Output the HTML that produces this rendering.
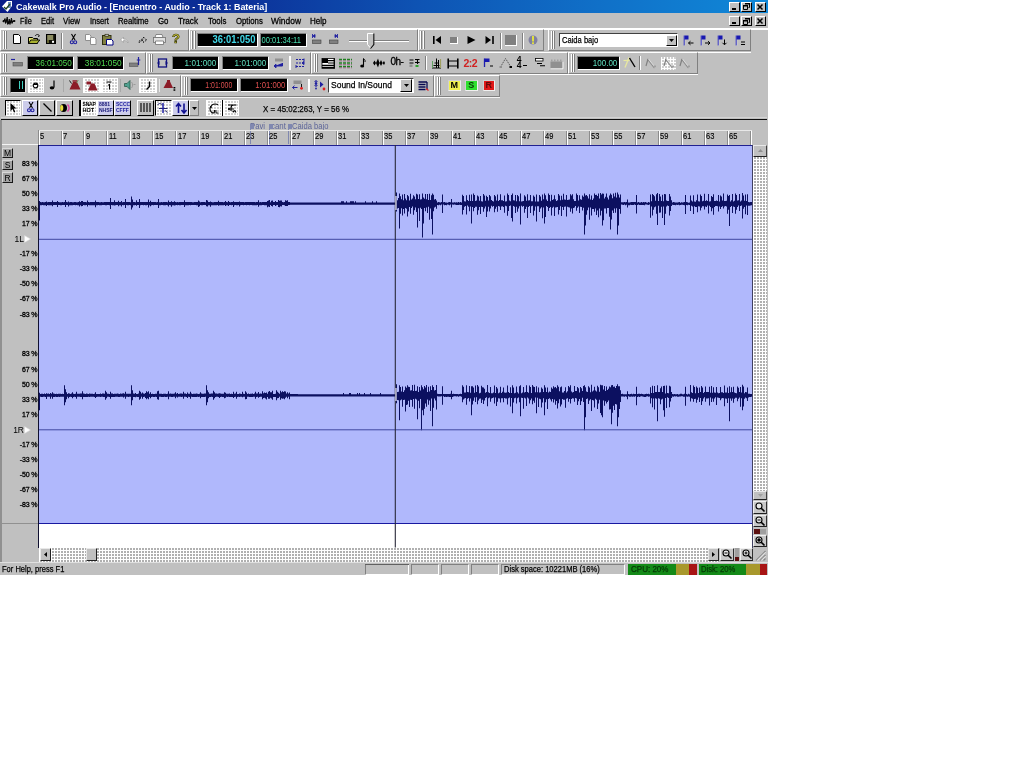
<!DOCTYPE html>
<html lang="en"><head><meta charset="utf-8"><title>Cakewalk Pro Audio</title>
<style>
html,body{margin:0;padding:0;background:#fff;}
body{width:1024px;height:768px;overflow:hidden;position:relative;}
#app{position:absolute;left:0;top:0;width:768px;height:575px;background:#c0c0c0;overflow:hidden;
 font-family:"Liberation Sans",sans-serif;font-size:8.3px;color:#000;line-height:10px;}
#app div,#app span,#app svg{position:absolute;box-sizing:border-box;}
#app svg{overflow:visible;}
#in{left:0;top:0;width:768px;height:575px;filter:blur(0.33px);will-change:transform;}
.t{white-space:nowrap;}
.b{font-weight:bold;}
.lcd{background:#000;border:1px solid;border-color:#808080 #fff #fff #808080;}
.lcd span{right:0.5px;top:1px;font-size:9px;line-height:10px;white-space:nowrap;transform-origin:100% 50%;}
.btn{background:#c0c0c0;border:1px solid;border-color:#fff #000 #000 #fff;}
.chk{background-color:#fff;background-image:linear-gradient(90deg,#fff 1.5px,rgba(255,255,255,0) 1.5px),linear-gradient(0deg,#fff 1.5px,#b0b0b0 1.5px);background-size:3px 3px,3px 3px;}
.chkb{background-color:#fff;background-image:linear-gradient(90deg,#fff 1.5px,rgba(255,255,255,0) 1.5px),linear-gradient(0deg,#fff 1.5px,#cfcfcf 1.5px);background-size:3px 3px,3px 3px;}
.dn{border:1px solid;border-color:#404040 #fff #fff #404040;}
.up{border:1px solid;border-color:#fff #404040 #404040 #fff;}
.sep{width:2px;border-left:1px solid #808080;border-right:1px solid #fff;}
.grip{width:2px;border-left:1px solid #fff;border-right:1px solid #808080;}
.tbend{width:1px;background:#808080;}
.lab{font-size:7px;line-height:8px;white-space:nowrap;text-align:right;width:37.3px;left:0;letter-spacing:-0.15px;-webkit-text-stroke:0.3px #000;}
.rl{font-size:9.4px;line-height:10px;top:131px;white-space:nowrap;-webkit-text-stroke:0.15px #000;transform:scaleX(0.8);transform-origin:0 50%;}
.tick{top:130px;width:2px;height:15px;border-left:1px solid #8c8c8c;border-right:1px solid #fff;margin-left:-1px;}
</style></head><body><div id="app"><div id="in">
<div style="left:0px;top:0px;width:768px;height:13px;background:linear-gradient(90deg,#0a1c88 0%,#0c3098 30%,#0e54b4 55%,#1070c8 78%,#1088d8 100%);"></div>
<svg style="left:2px;top:1px" width="11" height="11" viewBox="0 0 11 11"><path d="M0 5.5L5 0h5v5L5.5 11z" fill="#fff"/><path d="M6 1h3v6H6z" fill="#7090c0"/><path d="M2 6l2 2 4-5" stroke="#204020" stroke-width="1.3" fill="none"/></svg>
<span class="t" style="left:16px;top:2.0px;font-size:9.6px;transform:scaleX(0.932);transform-origin:0 50%;font-weight:bold;color:#fff;">Cakewalk Pro Audio - [Encuentro - Audio - Track 1: Bateria]</span>
<div class="btn" style="left:729px;top:1.5px;width:11px;height:10px;"></div>
<div style="left:732px;top:7.5px;width:4px;height:2px;background:#000;"></div>
<div class="btn" style="left:741px;top:1.5px;width:11px;height:10px;"></div>
<svg style="left:743px;top:3.0px" width="7" height="7" viewBox="0 0 7 7"><path d="M2.5 0.5h4v4h-1M0.5 2.5h4v4h-4z" fill="none" stroke="#000" stroke-width="1"/><path d="M2 0h5v1.6H2zM0 2h5v1.6H0z" fill="#000"/></svg>
<div class="btn" style="left:754.5px;top:1.5px;width:11px;height:10px;"></div>
<svg style="left:757.0px;top:3.5px" width="6" height="6" viewBox="0 0 6 6"><path d="M0.5 0.5l5 5M5.5 0.5l-5 5" stroke="#000" stroke-width="1.5"/></svg>
<div class="btn" style="left:729px;top:16px;width:11px;height:10px;"></div>
<div style="left:732px;top:22px;width:4px;height:2px;background:#000;"></div>
<div class="btn" style="left:741px;top:16px;width:11px;height:10px;"></div>
<svg style="left:743px;top:17.5px" width="7" height="7" viewBox="0 0 7 7"><path d="M2.5 0.5h4v4h-1M0.5 2.5h4v4h-4z" fill="none" stroke="#000" stroke-width="1"/><path d="M2 0h5v1.6H2zM0 2h5v1.6H0z" fill="#000"/></svg>
<div class="btn" style="left:754.5px;top:16px;width:11px;height:10px;"></div>
<svg style="left:757.0px;top:18px" width="6" height="6" viewBox="0 0 6 6"><path d="M0.5 0.5l5 5M5.5 0.5l-5 5" stroke="#000" stroke-width="1.5"/></svg>
<svg style="left:3px;top:16px" width="12" height="9" viewBox="0 0 12 9"><path d="M0 4.5h1l1-2 1 4 1.2-5.5 1 7 1-5 1.2 4 1-5 1 4 1-1.5h1.6v1H10l-1 2-1-3-1 4-1.2-3-1 3-1-5-1.2 4-1-3-1 1.5H0z" fill="#000" stroke="#000" stroke-width="0.8"/></svg>
<span class="t" style="left:20px;top:16.2px;font-size:9.6px;transform:scaleX(0.756);transform-origin:0 50%;-webkit-text-stroke:0.3px #000;">File</span>
<span class="t" style="left:41px;top:16.2px;font-size:9.6px;transform:scaleX(0.786);transform-origin:0 50%;-webkit-text-stroke:0.3px #000;">Edit</span>
<span class="t" style="left:63px;top:16.2px;font-size:9.6px;transform:scaleX(0.824);transform-origin:0 50%;-webkit-text-stroke:0.3px #000;">View</span>
<span class="t" style="left:90px;top:16.2px;font-size:9.6px;transform:scaleX(0.791);transform-origin:0 50%;-webkit-text-stroke:0.3px #000;">Insert</span>
<span class="t" style="left:117.5px;top:16.2px;font-size:9.6px;transform:scaleX(0.810);transform-origin:0 50%;-webkit-text-stroke:0.3px #000;">Realtime</span>
<span class="t" style="left:157.5px;top:16.2px;font-size:9.6px;transform:scaleX(0.820);transform-origin:0 50%;-webkit-text-stroke:0.3px #000;">Go</span>
<span class="t" style="left:178px;top:16.2px;font-size:9.6px;transform:scaleX(0.846);transform-origin:0 50%;-webkit-text-stroke:0.3px #000;">Track</span>
<span class="t" style="left:208px;top:16.2px;font-size:9.6px;transform:scaleX(0.817);transform-origin:0 50%;-webkit-text-stroke:0.3px #000;">Tools</span>
<span class="t" style="left:235.5px;top:16.2px;font-size:9.6px;transform:scaleX(0.810);transform-origin:0 50%;-webkit-text-stroke:0.3px #000;">Options</span>
<span class="t" style="left:271px;top:16.2px;font-size:9.6px;transform:scaleX(0.879);transform-origin:0 50%;-webkit-text-stroke:0.3px #000;">Window</span>
<span class="t" style="left:309.7px;top:16.2px;font-size:9.6px;transform:scaleX(0.836);transform-origin:0 50%;-webkit-text-stroke:0.3px #000;">Help</span>
<div style="left:0px;top:27.6px;width:768px;height:0.8px;background:#a0a0a0;"></div>
<div style="left:0px;top:28.4px;width:768px;height:1.2px;background:#fff;"></div>
<div style="left:0px;top:28.6px;width:188.5px;height:22.9px;border:1px solid;border-color:#fff #808080 #808080 #fff;"></div>
<div class="grip" style="left:2.5px;top:30.6px;width:2px;height:18.9px;"></div>
<div class="grip" style="left:5px;top:30.6px;width:2px;height:18.9px;"></div>
<div style="left:188.5px;top:28.6px;width:229.0px;height:22.9px;border:1px solid;border-color:#fff #808080 #808080 #fff;"></div>
<div class="grip" style="left:191.0px;top:30.6px;width:2px;height:18.9px;"></div>
<div class="grip" style="left:193.5px;top:30.6px;width:2px;height:18.9px;"></div>
<div style="left:417.5px;top:28.6px;width:126.5px;height:22.9px;border:1px solid;border-color:#fff #808080 #808080 #fff;"></div>
<div class="grip" style="left:420.0px;top:30.6px;width:2px;height:18.9px;"></div>
<div class="grip" style="left:422.5px;top:30.6px;width:2px;height:18.9px;"></div>
<div style="left:548px;top:28.6px;width:203px;height:22.9px;border:1px solid;border-color:#fff #808080 #808080 #fff;"></div>
<div class="grip" style="left:550.5px;top:30.6px;width:2px;height:18.9px;"></div>
<div class="grip" style="left:553px;top:30.6px;width:2px;height:18.9px;"></div>
<svg style="left:13px;top:34px" width="8" height="10" viewBox="0 0 8 10"><path d="M0.5 0.5h5l2 2v7h-7z" fill="#fff" stroke="#000" stroke-width="1"/></svg>
<svg style="left:28px;top:34px" width="13" height="10" viewBox="0 0 13 10"><path d="M0.5 3.5h4l1 1h4v5h-9z" fill="#e0e068" stroke="#000" stroke-width="1"/><path d="M2.8 6h9l-2.8 3.5h-8.5z" fill="#a8b030" stroke="#000" stroke-width="0.9"/><path d="M7 2c1.5-2 3.5-2 4.5 0l-1.5 0.5" fill="none" stroke="#000" stroke-width="0.9"/></svg>
<svg style="left:46px;top:34px" width="10" height="10" viewBox="0 0 10 10"><rect x="0.5" y="0.5" width="9" height="9" fill="#101008" stroke="#000"/><rect x="1.2" y="1" width="6" height="5" fill="#8c8c60"/><rect x="1" y="6" width="2" height="3" fill="#606030"/><rect x="6" y="6.8" width="2" height="2" fill="#fff"/></svg>
<div class="sep" style="left:61px;top:33px;width:2px;height:16px;"></div>
<svg style="left:70px;top:34px" width="7" height="11" viewBox="0 0 7 11"><path d="M1.5 0l3.5 6M5.5 0l-3.5 6" stroke="#000" stroke-width="1.1"/><circle cx="1.8" cy="8.3" r="1.5" fill="none" stroke="#2020a0" stroke-width="1.1"/><circle cx="5.2" cy="8.3" r="1.5" fill="none" stroke="#2020a0" stroke-width="1.1"/></svg>
<svg style="left:85px;top:34px" width="12" height="11" viewBox="0 0 12 11"><path d="M0.5 0.5h4l1.5 1.5v4.5h-5.5z" fill="#fff" stroke="#909090"/><path d="M5.5 3.5h4l1.5 1.5v5.5h-5.5z" fill="#fff" stroke="#909090"/></svg>
<svg style="left:102px;top:33.5px" width="12" height="12" viewBox="0 0 12 12"><rect x="0.5" y="1.5" width="8.5" height="9" fill="#808040" stroke="#303010"/><rect x="3" y="0.3" width="3.5" height="2" fill="#c0c0c0" stroke="#303010" stroke-width="0.7"/><path d="M4.5 5.5h5l1.5 1.5v4h-6.5z" fill="#fff" stroke="#000080"/></svg>
<svg style="left:120px;top:36px" width="9" height="8" viewBox="0 0 9 8"><path d="M0.5 4l3-3v2c3 0 4.5 1.5 4.5 4-1-2-2-2.5-4.5-2.5v2z" fill="#fff" stroke="#a0a0a0" stroke-width="0.8"/></svg>
<svg style="left:138px;top:36px" width="9" height="8" viewBox="0 0 9 8"><path d="M8.5 4l-3-3v2c-3 0-4.5 1.5-4.5 4 1-2 2-2.5 4.5-2.5v2z" fill="#c0c0c0" stroke="#000" stroke-width="0.8" stroke-dasharray="2 1.2"/></svg>
<svg style="left:153px;top:34px" width="13" height="11" viewBox="0 0 13 11"><path d="M3 0.5h6l1 3h-8z" fill="#fff" stroke="#707070" stroke-width="0.8"/><rect x="0.5" y="3.5" width="12" height="5" fill="#e0e0e0" stroke="#707070" stroke-width="0.8"/><path d="M2.5 7h8v3.5h-8z" fill="#fff" stroke="#707070" stroke-width="0.8"/></svg>
<span class="t" style="left:172px;top:32px;font-size:13px;font-weight:bold;color:#e8e040;line-height:14px;-webkit-text-stroke:0.7px #303000;">?</span>
<div class="lcd" style="left:196.5px;top:33px;width:61px;height:14px;"><span style="color:#40d8e8;font-size:10.2px;right:1.5px;top:1.3px;transform:scaleX(0.925);font-weight:bold;">36:01:050</span></div>
<div class="lcd" style="left:259.5px;top:33px;width:47px;height:14px;"><span style="color:#48e0b0;font-size:9.6px;right:5.0px;top:1.3px;transform:scaleX(0.790);">00:01:34:11</span></div>
<svg style="left:312px;top:34px" width="10" height="11" viewBox="0 0 10 11"><path d="M0.5 0v4M3 0.5l-2 1.5 2 1.5z" stroke="#2020a0" fill="#2020a0" stroke-width="0.9"/><rect x="0.5" y="6" width="8.5" height="3.5" fill="#808080" stroke="#404040" stroke-width="0.6"/></svg>
<svg style="left:329px;top:34px" width="10" height="11" viewBox="0 0 10 11"><path d="M8.5 0v4M6 0.5l2 1.5-2 1.5z" stroke="#2020a0" fill="#2020a0" stroke-width="0.9"/><rect x="0.5" y="6" width="8.5" height="3.5" fill="#808080" stroke="#404040" stroke-width="0.6"/></svg>
<div style="left:348.5px;top:39.5px;width:60px;height:2.5px;background:#fff;border-top:1px solid #808080;"></div>
<svg style="left:366.5px;top:33px" width="8" height="16" viewBox="0 0 8 16"><path d="M0.5 0.5h6v11l-3 3.5-3-3.5z" fill="#c0c0c0" stroke="#fff" stroke-width="1"/><path d="M6.8 0.5v11l-3.3 4" fill="none" stroke="#000" stroke-width="1.1"/></svg>
<svg style="left:433px;top:36px" width="9" height="8" viewBox="0 0 9 8"><path d="M0.8 0v8" stroke="#000" stroke-width="1.6"/><path d="M8 0v8l-5.5-4z" fill="#000"/></svg>
<div style="left:450px;top:36.5px;width:8px;height:7px;background:#808080;border-right:1px solid #fff;border-bottom:1px solid #fff;"></div>
<svg style="left:467px;top:36px" width="9" height="8" viewBox="0 0 9 8"><path d="M0.5 0l8 4-8 4z" fill="#000"/></svg>
<svg style="left:485px;top:36px" width="9" height="8" viewBox="0 0 9 8"><path d="M8 0v8" stroke="#000" stroke-width="1.6"/><path d="M0.5 0v8l5.5-4z" fill="#000"/></svg>
<div class="sep" style="left:499.5px;top:33px;width:2px;height:16px;"></div>
<div style="left:505px;top:34.5px;width:12px;height:11px;background:#808080;border-right:1px solid #fff;border-bottom:1px solid #fff;"></div>
<div class="sep" style="left:521.5px;top:33px;width:2px;height:16px;"></div>
<svg style="left:528px;top:35px" width="10" height="10" viewBox="0 0 10 10"><circle cx="5" cy="5" r="4.5" fill="#8080a0"/><rect x="4" y="1" width="2" height="5.5" fill="#e0e040"/><rect x="4" y="7.3" width="2" height="1.7" fill="#e0e040"/></svg>
<div style="left:559px;top:33px;width:119px;height:14px;background:#fff;border:1px solid;border-color:#404040 #fff #fff #404040;border-top-width:1.5px;border-left-width:1.5px;"></div>
<span class="t" style="left:562px;top:35px;font-size:9.4px;transform:scaleX(0.808);transform-origin:0 50%;-webkit-text-stroke:0.25px #000;">Caida bajo</span>
<div class="btn" style="left:666px;top:34.5px;width:11px;height:11.5px;"></div>
<svg style="left:669px;top:38.5px" width="5" height="3" viewBox="0 0 5 3"><path d="M0 0h5l-2.5 3z" fill="#000"/></svg>
<svg style="left:683px;top:34.5px" width="12" height="11" viewBox="0 0 12 11"><path d="M1.5 0.5v10" stroke="#fff" stroke-width="1.2"/><path d="M1.2 0.5v10" stroke="#2020b0" stroke-width="1"/><rect x="1.5" y="0.5" width="4" height="4" fill="#1818b0"/><path d="M5.5 8h5M5.5 8l2-1.8M5.5 8l2 1.8" stroke="#000" stroke-width="1" fill="none"/></svg>
<svg style="left:700px;top:34.5px" width="12" height="11" viewBox="0 0 12 11"><path d="M1.5 0.5v10" stroke="#fff" stroke-width="1.2"/><path d="M1.2 0.5v10" stroke="#2020b0" stroke-width="1"/><rect x="1.5" y="0.5" width="4" height="4" fill="#1818b0"/><path d="M5 8h5M10 8l-2-1.8M10 8l-2 1.8" stroke="#000" stroke-width="1" fill="none"/></svg>
<svg style="left:717px;top:34.5px" width="12" height="11" viewBox="0 0 12 11"><path d="M1.5 0.5v10" stroke="#fff" stroke-width="1.2"/><path d="M1.2 0.5v10" stroke="#2020b0" stroke-width="1"/><rect x="1.5" y="0.5" width="4" height="4" fill="#1818b0"/><path d="M7.5 4.5v5M7.5 9.8l-2-2M7.5 9.8l2-2" stroke="#000" stroke-width="1" fill="none"/></svg>
<svg style="left:735px;top:34.5px" width="12" height="11" viewBox="0 0 12 11"><path d="M1.5 0.5v10" stroke="#fff" stroke-width="1.2"/><path d="M1.2 0.5v10" stroke="#2020b0" stroke-width="1"/><rect x="1.5" y="0.5" width="4" height="4" fill="#1818b0"/><path d="M6 7h4M6 9.5h4" stroke="#000" stroke-width="1.1" fill="none"/></svg>
<div style="left:0px;top:52px;width:146px;height:22px;border:1px solid;border-color:#fff #808080 #808080 #fff;"></div>
<div class="grip" style="left:2.5px;top:54px;width:2px;height:18px;"></div>
<div class="grip" style="left:5px;top:54px;width:2px;height:18px;"></div>
<div style="left:146px;top:52px;width:165px;height:22px;border:1px solid;border-color:#fff #808080 #808080 #fff;"></div>
<div class="grip" style="left:148.5px;top:54px;width:2px;height:18px;"></div>
<div class="grip" style="left:151px;top:54px;width:2px;height:18px;"></div>
<div style="left:311px;top:52px;width:257px;height:22px;border:1px solid;border-color:#fff #808080 #808080 #fff;"></div>
<div class="grip" style="left:313.5px;top:54px;width:2px;height:18px;"></div>
<div class="grip" style="left:316px;top:54px;width:2px;height:18px;"></div>
<div style="left:568px;top:52px;width:130px;height:22px;border:1px solid;border-color:#fff #808080 #808080 #fff;"></div>
<div class="grip" style="left:570.5px;top:54px;width:2px;height:18px;"></div>
<div class="grip" style="left:573px;top:54px;width:2px;height:18px;"></div>
<svg style="left:10px;top:58px" width="13" height="9" viewBox="0 0 13 9"><path d="M1 1.5h4" stroke="#2020a0" stroke-width="1.2"/><rect x="3" y="4.5" width="9.5" height="3.5" fill="#808080" stroke="#505050" stroke-width="0.6"/></svg>
<div class="lcd" style="left:27px;top:55.5px;width:46.5px;height:14.5px;"><span style="color:#50d850;font-size:9.6px;right:0.9px;top:1.6px;transform:scaleX(0.845);">36:01:050</span></div>
<div class="lcd" style="left:76.5px;top:55.5px;width:47.5px;height:14.5px;"><span style="color:#50d850;font-size:9.6px;right:0.9px;top:1.6px;transform:scaleX(0.864);">38:01:050</span></div>
<svg style="left:129px;top:57px" width="12" height="10" viewBox="0 0 12 10"><rect x="0.5" y="6" width="8.5" height="3.5" fill="#808080" stroke="#505050" stroke-width="0.6"/><path d="M9.5 0v8M7.8 3h3.5" stroke="#2020a0" stroke-width="1.2"/></svg>
<svg style="left:156.5px;top:57.5px" width="11" height="10" viewBox="0 0 11 10"><rect x="1.5" y="1" width="8" height="8" fill="none" stroke="#101080" stroke-width="1.3"/><path d="M0 5l2.5-2v4zM11 5l-2.5-2v4z" fill="#101080"/></svg>
<div class="lcd" style="left:171.5px;top:55.5px;width:47px;height:14.5px;"><span style="color:#60e0c0;font-size:9.6px;right:0.9px;top:1.6px;transform:scaleX(0.851);">1:01:000</span></div>
<div class="lcd" style="left:221.5px;top:55.5px;width:47px;height:14.5px;"><span style="color:#60e0c0;font-size:9.6px;right:0.9px;top:1.6px;transform:scaleX(0.851);">1:01:000</span></div>
<svg style="left:273px;top:58px" width="11" height="10" viewBox="0 0 11 10"><rect x="2" y="0.5" width="8" height="3" fill="#909090"/><path d="M9.5 5v3h-8M1 8l2-1.8v3.6z" stroke="#2020a0" fill="#2020a0" stroke-width="1"/></svg>
<div style="left:289px;top:56px;width:2px;height:14px;background:#fff;width:1.5px;"></div>
<svg style="left:294.5px;top:57.5px" width="11" height="11" viewBox="0 0 11 11"><path d="M1 1.5h8M1 5h8M1 8.5h8" stroke="#2020a0" stroke-width="1" stroke-dasharray="2 1"/><path d="M9 0.5v3M1 7v3M7 5l2-1.5v3z" stroke="#2020a0" stroke-width="1" fill="#2020a0"/></svg>
<svg style="left:321.5px;top:57.5px" width="13" height="11" viewBox="0 0 13 11"><rect x="0" y="0.5" width="12.5" height="10" fill="#fff" stroke="#000" stroke-width="0.8"/><rect x="0" y="0.5" width="6" height="4.5" fill="#000"/><path d="M0 7.3h12.5M0 9.4h12.5M6 2.7h6.5M6 5h6.5" stroke="#000" stroke-width="1.2"/><path d="M12.2 0.5v10" stroke="#000" stroke-width="1.2"/></svg>
<svg style="left:338.5px;top:58px" width="13" height="10" viewBox="0 0 13 10"><path d="M0 1.5h13M0 5h13M0 8.5h13" stroke="#208020" stroke-width="1.5" stroke-dasharray="3 1"/><path d="M0 3h13M0 6.5h13M0 9.8h13" stroke="#802060" stroke-width="0.5" stroke-dasharray="3 1"/></svg>
<svg style="left:359.5px;top:57.5px" width="6" height="10" viewBox="0 0 6 10"><path d="M3.5 0.5v7" stroke="#000" stroke-width="1.1"/><ellipse cx="2.2" cy="8" rx="2" ry="1.5" fill="#000"/><path d="M3.5 0.5c1 1 2 1.5 1.5 3.5" stroke="#000" fill="none" stroke-width="0.9"/></svg>
<svg style="left:373px;top:58px" width="12" height="10" viewBox="0 0 12 10"><path d="M0 5l1.5-2.5 1.5 2.5 2-4.5 1.5 4.5 1.5-3 1.5 3 1.5-2 1 2-1 2-1.5-2-1.5 3-1.5-3-1.5 4.5-2-4.5-1.5 2.5z" fill="#000"/></svg>
<span class="t" style="left:390.5px;top:57.3px;font-size:10px;letter-spacing:-0.5px;-webkit-text-stroke:0.3px #000;">0h-</span>
<svg style="left:409px;top:58px" width="11" height="10" viewBox="0 0 11 10"><path d="M0.5 2h4M0.5 5h4M6 1.5h4.5M6 4.5h4.5M8.5 1v5" stroke="#000" stroke-width="1.1"/><rect x="0.5" y="6.5" width="3" height="2.5" fill="#909090"/><rect x="6.5" y="7" width="3" height="2" fill="#30a030"/></svg>
<div class="sep" style="left:424.5px;top:56px;width:2px;height:14px;"></div>
<svg style="left:431px;top:57.5px" width="12" height="11" viewBox="0 0 12 11"><path d="M1 10h9M2.5 7.5h6M3.5 5h4M5.5 0.5v9.5M7.5 2v8" stroke="#000" stroke-width="1"/><path d="M9.5 1v9" stroke="#a0a060" stroke-width="1.2"/><path d="M1.5 3v7" stroke="#60a060" stroke-width="1"/></svg>
<svg style="left:447px;top:57.5px" width="12" height="11" viewBox="0 0 12 11"><path d="M1.2 0.5v10M10.8 0.5v10" stroke="#000" stroke-width="1.6"/><path d="M1 3h10M1 8h10" stroke="#000" stroke-width="1"/></svg>
<span class="t" style="left:463.5px;top:57.5px;font-size:10.5px;font-weight:bold;color:#d02020;letter-spacing:-0.5px;line-height:11px;">2:2</span>
<svg style="left:483px;top:58px" width="11" height="10" viewBox="0 0 11 10"><path d="M1.5 0.5v8.5" stroke="#2020b0" stroke-width="1.3"/><rect x="1.5" y="0.5" width="5" height="3.5" fill="#1818b0"/><path d="M7 8h3" stroke="#000" stroke-width="1"/></svg>
<svg style="left:499px;top:57.5px" width="14" height="11" viewBox="0 0 14 11"><path d="M1.5 9l5-8.5 5.5 8.5" fill="none" stroke="#505050" stroke-width="0.9" stroke-dasharray="1.5 0.8"/><rect x="0.5" y="8" width="2.5" height="2" fill="#909090"/><rect x="10.5" y="8" width="2.5" height="2" fill="#000"/></svg>
<span class="t" style="left:516.8px;top:56.3px;font-size:8.5px;font-weight:bold;line-height:7px;">4</span>
<span class="t" style="left:516.8px;top:62.3px;font-size:8.5px;font-weight:bold;line-height:7px;">4</span>
<div style="left:523px;top:65px;width:4px;height:1px;background:#000;"></div>
<svg style="left:535px;top:58px" width="11" height="9" viewBox="0 0 11 9"><rect x="0.5" y="0.5" width="7.5" height="2.5" fill="#fff" stroke="#000" stroke-width="0.8"/><path d="M2 5.5h5M5 7.8h5" stroke="#000" stroke-width="1.1"/></svg>
<svg style="left:550px;top:57.5px" width="13" height="11" viewBox="0 0 13 11"><rect x="0.5" y="3.5" width="12" height="7" fill="#909090"/><path d="M0.5 10.8h12.5v-7" stroke="#fff" fill="none" stroke-width="0.8"/><path d="M1 2.5h11.5" stroke="#a0a0a0" stroke-width="2" stroke-dasharray="1.5 1.5"/></svg>
<div class="lcd" style="left:576.5px;top:55.5px;width:43px;height:14.5px;"><span style="color:#60e0c0;font-size:9.6px;right:1.3px;top:1.6px;transform:scaleX(0.838);">100.00</span></div>
<svg style="left:622.5px;top:57px" width="13" height="11" viewBox="0 0 13 11"><path d="M6 0.5l-4 10" stroke="#e8e8a0" stroke-width="1.3"/><path d="M0.5 3.5h6" stroke="#e8e8a0" stroke-width="1.2"/><path d="M6.5 1l5.5 9" stroke="#000" stroke-width="1.4"/></svg>
<div class="sep" style="left:639px;top:56px;width:2px;height:14px;"></div>
<svg style="left:645px;top:57.5px" width="12" height="11" viewBox="0 0 12 11"><path d="M2.5 1l7 9" stroke="#909090" stroke-width="1.3"/><path d="M3 1l-2 7" stroke="#808080" stroke-width="1.2"/><path d="M3.5 1l7 9" stroke="#e8e8e8" stroke-width="0.8"/><rect x="8.5" y="7.5" width="2.5" height="2" fill="#a0a0a0"/></svg>
<div class="chkb" style="left:661px;top:56.5px;width:15px;height:13.5px;"></div>
<svg style="left:662.5px;top:57.5px" width="12" height="11" viewBox="0 0 12 11"><path d="M2.5 1l7 9" stroke="#909090" stroke-width="1.3"/><path d="M3 1l-2 7" stroke="#808080" stroke-width="1.2"/><path d="M3.5 1l7 9" stroke="#e8e8e8" stroke-width="0.8"/><rect x="8.5" y="7.5" width="2.5" height="2" fill="#a0a0a0"/></svg>
<svg style="left:679px;top:57.5px" width="12" height="11" viewBox="0 0 12 11"><path d="M2.5 1l7 9" stroke="#909090" stroke-width="1.3"/><path d="M3 1l-2 7" stroke="#808080" stroke-width="1.2"/><path d="M3.5 1l7 9" stroke="#e8e8e8" stroke-width="0.8"/><rect x="8.5" y="7.5" width="2.5" height="2" fill="#a0a0a0"/></svg>
<div style="left:0px;top:74.5px;width:181px;height:22.5px;border:1px solid;border-color:#fff #808080 #808080 #fff;"></div>
<div class="grip" style="left:2.5px;top:76.5px;width:2px;height:18.5px;"></div>
<div class="grip" style="left:5px;top:76.5px;width:2px;height:18.5px;"></div>
<div style="left:181px;top:74.5px;width:253px;height:22.5px;border:1px solid;border-color:#fff #808080 #808080 #fff;"></div>
<div class="grip" style="left:183.5px;top:76.5px;width:2px;height:18.5px;"></div>
<div class="grip" style="left:186px;top:76.5px;width:2px;height:18.5px;"></div>
<div style="left:434px;top:74.5px;width:66px;height:22.5px;border:1px solid;border-color:#fff #808080 #808080 #fff;"></div>
<div class="grip" style="left:436.5px;top:76.5px;width:2px;height:18.5px;"></div>
<div class="grip" style="left:439px;top:76.5px;width:2px;height:18.5px;"></div>
<div style="left:9.5px;top:77.5px;width:16.5px;height:15.5px;background:#000;border:1px solid;border-color:#606060 #e0e0e0 #e0e0e0 #606060;"></div>
<div style="left:18.5px;top:81px;width:1.3px;height:8px;background:#40d0c0;"></div>
<div style="left:22px;top:81px;width:1.3px;height:8px;background:#40d0c0;"></div>
<div class="chkb" style="left:27.5px;top:77.5px;width:16.5px;height:15.5px;border:1px solid #fff;"></div>
<svg style="left:32px;top:82px" width="7" height="7" viewBox="0 0 7 7"><circle cx="3.5" cy="3.5" r="2.3" fill="#fff" stroke="#000" stroke-width="1.2"/><path d="M1 2.5h5" stroke="#000" stroke-width="1"/></svg>
<svg style="left:49px;top:80px" width="7" height="10" viewBox="0 0 7 10"><path d="M5 0.5v7" stroke="#000" stroke-width="1.2"/><ellipse cx="3" cy="7.8" rx="2.3" ry="1.6" fill="#000"/></svg>
<div style="left:63px;top:79px;width:1px;height:13px;background:#a8a8a8;"></div>
<svg style="left:69px;top:80px" width="12" height="10" viewBox="0 0 12 10"><path d="M4 2h4l3.5 7.5h-11z" fill="#8c1c28"/><path d="M3.5 1h5" stroke="#8c1c28" stroke-width="1.5"/><path d="M0.5 0.5l2 3" stroke="#000" stroke-width="0.9"/><path d="M9.5 0l-2 3" stroke="#60a060" stroke-width="0.7"/></svg>
<div class="chkb" style="left:83px;top:77.5px;width:17.5px;height:15.5px;border:1px solid #fff;"></div>
<svg style="left:86px;top:80.5px" width="12" height="10" viewBox="0 0 12 10"><path d="M0.5 0.5h4.5v3h-4.5z" fill="#8c1c28"/><path d="M5 2.5h3.5l3 7h-9.5z" fill="#8c1c28"/></svg>
<div class="chkb" style="left:101px;top:77.5px;width:16.5px;height:15.5px;border:1px solid #fff;"></div>
<svg style="left:106px;top:81px" width="6" height="9" viewBox="0 0 6 9"><path d="M0.5 1h5M3.5 3v5.5M2 4h1.5" stroke="#000" stroke-width="1.1" fill="none"/></svg>
<div style="left:120px;top:79px;width:1px;height:13px;background:#a8a8a8;"></div>
<svg style="left:124px;top:80px" width="12" height="10" viewBox="0 0 12 10"><path d="M0.5 3.5h2.5l3-3v9l-3-3h-2.5z" fill="#50a090" stroke="#205040" stroke-width="0.7"/><path d="M7.5 2c1.5 1.5 1.5 4.5 0 6M9.5 4.5h2" stroke="#909090" stroke-width="0.8" fill="none"/></svg>
<div class="chkb" style="left:139px;top:77.5px;width:18px;height:15.5px;border:1px solid #fff;"></div>
<svg style="left:145px;top:80.5px" width="6" height="9" viewBox="0 0 6 9"><path d="M4.5 0.5v5l-3 3" stroke="#000" stroke-width="1.4" fill="none"/></svg>
<div style="left:158.5px;top:79px;width:1px;height:13px;background:#e8e8e8;"></div>
<svg style="left:163px;top:79.5px" width="13" height="11" viewBox="0 0 13 11"><path d="M4 1.5h3l3 6.5h-9.5z" fill="#8c1c28"/><rect x="4" y="0" width="3" height="2" fill="#8c1c28"/><rect x="10.5" y="7" width="1.8" height="1.5" fill="#000"/><rect x="10.5" y="9.3" width="1.8" height="1.5" fill="#000"/></svg>
<div class="lcd" style="left:190px;top:78px;width:47.5px;height:13.5px;"><span style="color:#e05050;font-size:8.8px;right:4.7px;top:1.1px;transform:scaleX(0.785);">1:01:000</span></div>
<div class="lcd" style="left:240px;top:78px;width:47.5px;height:13.5px;"><span style="color:#e05050;font-size:8.8px;right:1.1px;top:1.1px;transform:scaleX(0.873);">1:01:000</span></div>
<svg style="left:292px;top:80px" width="12" height="10" viewBox="0 0 12 10"><rect x="1.5" y="0.5" width="8" height="3.5" fill="#909090"/><path d="M0.5 7.5h5M0.5 7.5l2-1.8M0.5 7.5l2 1.8" stroke="#2020a0" stroke-width="1" fill="none"/><path d="M9.5 4v3" stroke="#000" stroke-width="0.9"/><circle cx="9.5" cy="8.3" r="1.4" fill="#e02020"/></svg>
<div style="left:308px;top:79px;width:1.5px;height:13px;background:#fff;"></div>
<svg style="left:313.5px;top:79.5px" width="12" height="11" viewBox="0 0 12 11"><path d="M2 0.5v6M0.5 2l1.5-1.5 1.5 1.5M0.5 5l1.5 1.5 1.5-1.5" stroke="#2020a0" stroke-width="1" fill="none"/><circle cx="2" cy="3.5" r="1.3" fill="#2020a0"/><circle cx="2" cy="8.5" r="0.9" fill="#2020a0"/><path d="M6 1.5v6l3.5-3z" fill="#2020a0"/><circle cx="10" cy="9" r="1.4" fill="#e02020"/></svg>
<div style="left:328px;top:77.5px;width:85.5px;height:15.5px;background:#fff;border:1px solid;border-color:#404040 #fff #fff #404040;border-top-width:1.5px;border-left-width:1.5px;"></div>
<span class="t" style="left:331px;top:79.8px;font-size:9.4px;transform:scaleX(0.905);transform-origin:0 50%;-webkit-text-stroke:0.25px #000;">Sound In/Sound</span>
<div class="btn" style="left:400px;top:79px;width:12px;height:12.5px;"></div>
<svg style="left:403.5px;top:83.5px" width="5" height="3" viewBox="0 0 5 3"><path d="M0 0h5l-2.5 3z" fill="#000"/></svg>
<svg style="left:417.5px;top:80.5px" width="12" height="10" viewBox="0 0 12 10"><path d="M0.5 1h8.5M0.5 3.5h7M0.5 6h7M0.5 8.5h7" stroke="#080850" stroke-width="1.3"/><path d="M9 1v7.5" stroke="#080850" stroke-width="1.3"/><path d="M8 7.5l2.5 2" stroke="#e02020" stroke-width="1.2"/></svg>
<div style="left:448px;top:79.5px;width:12.5px;height:11.5px;background:#f0f050;border:1px solid;border-color:#d0d0d0 #f0f0f0 #f0f0f0 #d0d0d0;"></div>
<span class="t" style="left:448px;top:80.3px;width:12.5px;text-align:center;font-weight:bold;font-size:9px;color:#000;">M</span>
<div style="left:465px;top:79.5px;width:12.5px;height:11.5px;background:#30e030;border:1px solid;border-color:#d0d0d0 #f0f0f0 #f0f0f0 #d0d0d0;"></div>
<span class="t" style="left:465px;top:80.3px;width:12.5px;text-align:center;font-weight:bold;font-size:9px;color:#043804;">S</span>
<div style="left:482.5px;top:79.5px;width:12.5px;height:11.5px;background:#e01818;border:1px solid;border-color:#d0d0d0 #f0f0f0 #f0f0f0 #d0d0d0;"></div>
<span class="t" style="left:482.5px;top:80.3px;width:12.5px;text-align:center;font-weight:bold;font-size:9px;color:#600808;">R</span>
<div style="left:698px;top:51.6px;width:53px;height:1px;background:#fff;"></div>
<div style="left:500px;top:74.1px;width:198px;height:1px;background:#fff;"></div>
<div style="left:0px;top:97.1px;width:500px;height:1px;background:#f4f4f4;"></div>
<div class="chkb" style="left:4.5px;top:100px;width:16.5px;height:15.5px;border:1px solid;border-color:#000 #fff #fff #000;"></div>
<svg style="left:10px;top:103px" width="7" height="10" viewBox="0 0 7 10"><path d="M0.5 0v8l2-2 1.5 3.5 1.3-0.6-1.5-3.3h2.7z" fill="#000"/></svg>
<div style="left:22px;top:100px;width:16px;height:15.5px;background:#c0c0c0;border:1px solid;border-color:#fff #000 #000 #fff;"></div>
<div style="left:23px;top:101px;width:14px;height:13.5px;background:#ccccea;"></div>
<svg style="left:27px;top:102px" width="8" height="11" viewBox="0 0 8 11"><path d="M2 0l3.5 6M6 0l-3.5 6" stroke="#000" stroke-width="1.1"/><circle cx="2" cy="8.3" r="1.5" fill="none" stroke="#2020a0" stroke-width="1.1"/><circle cx="5.5" cy="8.3" r="1.5" fill="none" stroke="#2020a0" stroke-width="1.1"/></svg>
<div style="left:39px;top:100px;width:16px;height:15.5px;background:#c0c0c0;border:1px solid;border-color:#fff #000 #000 #fff;"></div>
<svg style="left:43px;top:103px" width="9" height="9" viewBox="0 0 9 9"><path d="M0.5 0.5l8 8" stroke="#000" stroke-width="1.3"/></svg>
<div style="left:56px;top:100px;width:16.5px;height:15.5px;background:#c0c0c0;border:1px solid;border-color:#fff #000 #000 #fff;"></div>
<svg style="left:59px;top:103px" width="12" height="10" viewBox="0 0 12 10"><ellipse cx="4.5" cy="5" rx="3.5" ry="4" fill="#000"/><ellipse cx="2.7" cy="5" rx="1.6" ry="3" fill="#e8e040"/><path d="M8.5 1.5c2 2 2 5 0 7" stroke="#e040a0" stroke-width="1.5" fill="none"/></svg>
<div style="left:79px;top:100px;width:1.5px;height:15.5px;background:#000;"></div>
<div class="chkb" style="left:80.5px;top:100px;width:16px;height:15.5px;border:1px solid #fff;"></div>
<span class="t" style="left:82.5px;top:101px;font-size:5px;line-height:6px;font-weight:bold;letter-spacing:-0.2px;">SNAP</span>
<span class="t" style="left:82.5px;top:107px;font-size:5.5px;line-height:6px;font-weight:bold;">HOT</span>
<div style="left:97px;top:100px;width:16.5px;height:15.5px;background:#c0c0c0;border:1px solid;border-color:#fff #000 #000 #fff;"></div>
<div style="left:98px;top:101px;width:14.5px;height:13.5px;background:#ccccea;"></div>
<span class="t" style="left:99px;top:101px;font-size:5px;line-height:6px;font-weight:bold;color:#181878;">8881</span>
<span class="t" style="left:99px;top:107px;font-size:5px;line-height:6px;font-weight:bold;color:#181878;">NHSF</span>
<div style="left:114px;top:100px;width:16.5px;height:15.5px;background:#c0c0c0;border:1px solid;border-color:#fff #000 #000 #fff;"></div>
<div style="left:115px;top:101px;width:14.5px;height:13.5px;background:#ccccea;"></div>
<span class="t" style="left:116px;top:101px;font-size:5px;line-height:6px;font-weight:bold;color:#2020a0;">SCCC</span>
<span class="t" style="left:116px;top:107px;font-size:5px;line-height:6px;font-weight:bold;color:#2020a0;">CFFF</span>
<div style="left:137px;top:100px;width:17px;height:15.5px;background:#c0c0c0;border:1px solid;border-color:#fff #000 #000 #fff;"></div>
<svg style="left:140px;top:103px" width="11" height="9" viewBox="0 0 11 9"><path d="M1 0v9M4 0v9M7 0v9M10 0v9" stroke="#000" stroke-width="1.1"/></svg>
<div class="chkb" style="left:154.5px;top:100px;width:17px;height:15.5px;border:1px solid;border-color:#000 #fff #fff #000;"></div>
<svg style="left:157px;top:103px" width="12" height="10" viewBox="0 0 12 10"><path d="M0.5 2c1.5-2 3-2 5 0M6 0v10M2 5.5h8.5M8 7.5l2.5 2" stroke="#101060" stroke-width="0.9" fill="none"/><path d="M6 0v10" stroke="#2020c0" stroke-width="1"/></svg>
<div style="left:172px;top:100px;width:17px;height:15.5px;background:#c0c0c0;border:1px solid;border-color:#fff #000 #000 #fff;"></div>
<div style="left:173px;top:101px;width:15px;height:13.5px;background:#ccccea;"></div>
<svg style="left:175.5px;top:102.5px" width="11" height="11" viewBox="0 0 11 11"><path d="M2.5 10v-9M0 3.5l2.5-3 2.5 3M8 0.5v9M5.5 7l2.5 3 2.5-3" stroke="#101090" stroke-width="1.6" fill="none"/></svg>
<div style="left:189px;top:100px;width:10px;height:15.5px;background:#c0c0c0;border:1px solid;border-color:#fff #808080 #808080 #fff;"></div>
<svg style="left:191.5px;top:107px" width="5" height="3" viewBox="0 0 5 3"><path d="M0 0h5l-2.5 3z" fill="#000"/></svg>
<div class="chkb" style="left:205.5px;top:100px;width:16px;height:15.5px;border:1px solid #fff;"></div>
<svg style="left:208px;top:102.5px" width="12" height="11" viewBox="0 0 12 11"><path d="M10 1.5c-5-1.5-8 1-8 4.5s3 4.5 5 3.5" stroke="#000" stroke-width="1.1" fill="none"/><circle cx="3" cy="4" r="0.9"/><circle cx="6.5" cy="8" r="0.9"/><path d="M8 7v3h2.5" stroke="#000" stroke-width="0.9" fill="none"/></svg>
<div style="left:222px;top:100px;width:1px;height:15.5px;background:#000;"></div>
<div class="chkb" style="left:223px;top:100px;width:16px;height:15.5px;border:1px solid #fff;"></div>
<svg style="left:225.5px;top:102.5px" width="12" height="11" viewBox="0 0 12 11"><path d="M2 2h8.5M8 2c-2 0-3 1-3 3M2 6h6M5 4v4M8.5 7l1.5 2.5" stroke="#000" stroke-width="1.1" fill="none"/><circle cx="3" cy="6" r="1"/><circle cx="7.5" cy="8.5" r="1"/></svg>
<span class="t" style="left:263px;top:104px;font-size:9.4px;transform:scaleX(0.845);transform-origin:0 50%;-webkit-text-stroke:0.25px #000;">X = 45:02:263, Y = 56 %</span>
<div style="left:1px;top:118.5px;width:766px;height:1.5px;background:#101010;"></div>
<div style="left:1px;top:116.7px;width:766px;height:0.8px;background:#d4d4d4;"></div>
<div style="left:1.5px;top:144.1px;width:37px;height:1px;background:#f4f4f4;"></div>
<span class="t" style="left:250px;top:120.9px;font-size:9.4px;transform:scaleX(0.820);transform-origin:0 50%;color:#5c6498;">Pavi</span>
<span class="t" style="left:271px;top:120.9px;font-size:9.4px;transform:scaleX(0.844);transform-origin:0 50%;color:#5c6498;">cant</span>
<span class="t" style="left:292px;top:120.9px;font-size:9.4px;transform:scaleX(0.812);transform-origin:0 50%;color:#5c6498;">Caida bajo</span>
<div style="left:250px;top:124px;width:4px;height:4.5px;background:#8088b0;"></div>
<div style="left:250px;top:124px;width:1px;height:20px;background:#8088b0;"></div>
<div style="left:268.5px;top:124px;width:4px;height:4.5px;background:#8088b0;"></div>
<div style="left:268.5px;top:124px;width:1px;height:20px;background:#8088b0;"></div>
<div style="left:287.5px;top:124px;width:4px;height:4.5px;background:#8088b0;"></div>
<div style="left:287.5px;top:124px;width:1px;height:20px;background:#8088b0;"></div>
<div class="tick" style="left:38.5px"></div>
<span class="rl" style="left:39.7px">5</span>
<div class="tick" style="left:61.5px"></div>
<span class="rl" style="left:62.7px">7</span>
<div class="tick" style="left:84.4px"></div>
<span class="rl" style="left:85.6px">9</span>
<div class="tick" style="left:107.4px"></div>
<span class="rl" style="left:108.6px">11</span>
<div class="tick" style="left:130.4px"></div>
<span class="rl" style="left:131.6px">13</span>
<div class="tick" style="left:153.3px"></div>
<span class="rl" style="left:154.5px">15</span>
<div class="tick" style="left:176.3px"></div>
<span class="rl" style="left:177.5px">17</span>
<div class="tick" style="left:199.3px"></div>
<span class="rl" style="left:200.5px">19</span>
<div class="tick" style="left:222.3px"></div>
<span class="rl" style="left:223.5px">21</span>
<div class="tick" style="left:245.2px"></div>
<span class="rl" style="left:246.4px">23</span>
<div class="tick" style="left:268.2px"></div>
<span class="rl" style="left:269.4px">25</span>
<div class="tick" style="left:291.2px"></div>
<span class="rl" style="left:292.4px">27</span>
<div class="tick" style="left:314.1px"></div>
<span class="rl" style="left:315.3px">29</span>
<div class="tick" style="left:337.1px"></div>
<span class="rl" style="left:338.3px">31</span>
<div class="tick" style="left:360.1px"></div>
<span class="rl" style="left:361.3px">33</span>
<div class="tick" style="left:383.0px"></div>
<span class="rl" style="left:384.2px">35</span>
<div class="tick" style="left:406.0px"></div>
<span class="rl" style="left:407.2px">37</span>
<div class="tick" style="left:429.0px"></div>
<span class="rl" style="left:430.2px">39</span>
<div class="tick" style="left:452.0px"></div>
<span class="rl" style="left:453.2px">41</span>
<div class="tick" style="left:474.9px"></div>
<span class="rl" style="left:476.1px">43</span>
<div class="tick" style="left:497.9px"></div>
<span class="rl" style="left:499.1px">45</span>
<div class="tick" style="left:520.9px"></div>
<span class="rl" style="left:522.1px">47</span>
<div class="tick" style="left:543.8px"></div>
<span class="rl" style="left:545.0px">49</span>
<div class="tick" style="left:566.8px"></div>
<span class="rl" style="left:568.0px">51</span>
<div class="tick" style="left:589.8px"></div>
<span class="rl" style="left:591.0px">53</span>
<div class="tick" style="left:612.8px"></div>
<span class="rl" style="left:614.0px">55</span>
<div class="tick" style="left:635.7px"></div>
<span class="rl" style="left:636.9px">57</span>
<div class="tick" style="left:658.7px"></div>
<span class="rl" style="left:659.9px">59</span>
<div class="tick" style="left:681.7px"></div>
<span class="rl" style="left:682.9px">61</span>
<div class="tick" style="left:704.6px"></div>
<span class="rl" style="left:705.8px">63</span>
<div class="tick" style="left:727.6px"></div>
<span class="rl" style="left:728.8px">65</span>
<div class="tick" style="left:750.6px"></div>
<div style="left:39px;top:130px;width:713px;height:1px;background:#e8e8e8;"></div>
<div style="left:0px;top:120px;width:1.5px;height:442px;background:#909090;"></div>
<div style="left:2px;top:147.5px;width:11px;height:10.5px;background:#a2a2a2;border:1px solid;border-color:#d8d8d8 #181818 #181818 #d8d8d8;"></div>
<span class="t" style="left:2px;top:148.0px;width:11px;text-align:center;font-size:8.5px;">M</span>
<div style="left:2px;top:159.5px;width:11px;height:10.5px;background:#a2a2a2;border:1px solid;border-color:#d8d8d8 #181818 #181818 #d8d8d8;"></div>
<span class="t" style="left:2px;top:160.0px;width:11px;text-align:center;font-size:8.5px;">S</span>
<div style="left:2px;top:172px;width:11px;height:10.5px;background:#a2a2a2;border:1px solid;border-color:#d8d8d8 #181818 #181818 #d8d8d8;"></div>
<span class="t" style="left:2px;top:172.5px;width:11px;text-align:center;font-size:8.5px;">R</span>
<span class="lab" style="top:159.5px">83 %</span>
<span class="lab" style="top:174.6px">67 %</span>
<span class="lab" style="top:189.7px">50 %</span>
<span class="lab" style="top:204.8px">33 %</span>
<span class="lab" style="top:219.9px">17 %</span>
<span class="lab" style="top:234.0px;width:24px;font-size:8.5px;line-height:10px;-webkit-text-stroke:0;letter-spacing:0">1L</span>
<svg style="left:23.5px;top:235.0px" width="7" height="8" viewBox="0 0 7 8"><path d="M0.5 0.5l6 3.5-6 3.5z" fill="#fff" stroke="#d8d8d8" stroke-width="0.6"/></svg>
<span class="lab" style="top:250.1px">-17 %</span>
<span class="lab" style="top:265.2px">-33 %</span>
<span class="lab" style="top:280.3px">-50 %</span>
<span class="lab" style="top:295.4px">-67 %</span>
<span class="lab" style="top:310.5px">-83 %</span>
<span class="lab" style="top:350.4px">83 %</span>
<span class="lab" style="top:365.5px">67 %</span>
<span class="lab" style="top:380.6px">50 %</span>
<span class="lab" style="top:395.7px">33 %</span>
<span class="lab" style="top:410.8px">17 %</span>
<span class="lab" style="top:424.9px;width:24px;font-size:8.5px;line-height:10px;-webkit-text-stroke:0;letter-spacing:0">1R</span>
<svg style="left:23.5px;top:425.9px" width="7" height="8" viewBox="0 0 7 8"><path d="M0.5 0.5l6 3.5-6 3.5z" fill="#fff" stroke="#d8d8d8" stroke-width="0.6"/></svg>
<span class="lab" style="top:441.0px">-17 %</span>
<span class="lab" style="top:456.1px">-33 %</span>
<span class="lab" style="top:471.2px">-50 %</span>
<span class="lab" style="top:486.3px">-67 %</span>
<span class="lab" style="top:501.4px">-83 %</span>
<div style="left:38px;top:144.5px;width:1.5px;height:403px;background:#101030;"></div>
<div style="left:39px;top:145px;width:713px;height:378.5px;background:#b0b8fc;border-top:1.5px solid #202090;border-bottom:1.5px solid #1818a0;"></div>
<div style="left:39px;top:524.0px;width:713px;height:23.5px;background:#fff;"></div>
<div style="left:1.5px;top:523.4px;width:36.5px;height:1.1px;background:#fff;"></div>
<div style="left:0px;top:522.5px;width:38px;height:0.8px;background:#909090;"></div>
<svg style="left:0;top:0" width="768" height="575" viewBox="0 0 768 575"><path d="M39 201.1L40 201.1L40 202.1L41 202.1L41 202.2L42 202.2L42 201.9L43 201.9L43 202.2L44 202.2L44 202.2L45 202.2L45 202.0L46 202.0L46 201.5L47 201.5L47 202.2L48 202.2L48 201.9L49 201.9L49 202.1L50 202.1L50 202.1L51 202.1L51 201.9L52 201.9L52 200.5L53 200.5L53 201.9L54 201.9L54 201.9L55 201.9L55 201.9L56 201.9L56 202.1L57 202.1L57 200.9L58 200.9L58 201.9L59 201.9L59 202.2L60 202.2L60 202.2L61 202.2L61 202.2L62 202.2L62 202.0L63 202.0L63 202.2L64 202.2L64 201.9L65 201.9L65 200.1L66 200.1L66 202.0L67 202.0L67 202.2L68 202.2L68 201.5L69 201.5L69 202.2L70 202.2L70 202.1L71 202.1L71 202.0L72 202.0L72 202.2L73 202.2L73 202.2L74 202.2L74 201.9L75 201.9L75 201.9L76 201.9L76 202.2L77 202.2L77 202.2L78 202.2L78 201.9L79 201.9L79 201.3L80 201.3L80 201.9L81 201.9L81 201.0L82 201.0L82 201.1L83 201.1L83 202.0L84 202.0L84 201.9L85 201.9L85 202.0L86 202.0L86 202.2L87 202.2L87 200.5L88 200.5L88 202.0L89 202.0L89 202.2L90 202.2L90 201.9L91 201.9L91 201.9L92 201.9L92 202.0L93 202.0L93 202.1L94 202.1L94 202.0L95 202.0L95 200.6L96 200.6L96 201.9L97 201.9L97 202.0L98 202.0L98 201.9L99 201.9L99 202.2L100 202.2L100 202.2L101 202.2L101 202.0L102 202.0L102 202.2L103 202.2L103 202.2L104 202.2L104 202.0L105 202.0L105 202.1L106 202.1L106 202.1L107 202.1L107 201.9L108 201.9L108 202.1L109 202.1L109 201.9L110 201.9L110 198.1L111 198.1L111 202.1L112 202.1L112 202.1L113 202.1L113 202.1L114 202.1L114 200.3L115 200.3L115 202.0L116 202.0L116 201.9L117 201.9L117 202.1L118 202.1L118 200.7L119 200.7L119 202.0L120 202.0L120 201.9L121 201.9L121 200.9L122 200.9L122 202.2L123 202.2L123 202.0L124 202.0L124 201.9L125 201.9L125 199.1L126 199.1L126 202.0L127 202.0L127 202.0L128 202.0L128 202.0L129 202.0L129 201.9L130 201.9L130 202.2L131 202.2L131 196.6L132 196.6L132 199.6L133 199.6L133 202.0L134 202.0L134 201.9L135 201.9L135 202.2L136 202.2L136 200.2L137 200.2L137 201.9L138 201.9L138 201.9L139 201.9L139 199.1L140 199.1L140 202.0L141 202.0L141 201.9L142 201.9L142 202.0L143 202.0L143 202.0L144 202.0L144 202.0L145 202.0L145 201.9L146 201.9L146 201.9L147 201.9L147 202.0L148 202.0L148 199.6L149 199.6L149 202.1L150 202.1L150 200.7L151 200.7L151 201.9L152 201.9L152 202.1L153 202.1L153 201.9L154 201.9L154 202.1L155 202.1L155 201.9L156 201.9L156 202.2L157 202.2L157 202.0L158 202.0L158 199.1L159 199.1L159 202.2L160 202.2L160 202.2L161 202.2L161 202.1L162 202.1L162 202.2L163 202.2L163 202.0L164 202.0L164 202.0L165 202.0L165 202.0L166 202.0L166 202.1L167 202.1L167 202.2L168 202.2L168 200.6L169 200.6L169 202.1L170 202.1L170 202.1L171 202.1L171 201.3L172 201.3L172 201.9L173 201.9L173 202.0L174 202.0L174 201.3L175 201.3L175 202.0L176 202.0L176 202.2L177 202.2L177 201.9L178 201.9L178 202.2L179 202.2L179 202.1L180 202.1L180 202.1L181 202.1L181 202.0L182 202.0L182 201.9L183 201.9L183 202.0L184 202.0L184 200.3L185 200.3L185 202.0L186 202.0L186 202.1L187 202.1L187 201.9L188 201.9L188 201.9L189 201.9L189 201.9L190 201.9L190 201.9L191 201.9L191 201.9L192 201.9L192 202.2L193 202.2L193 202.2L194 202.2L194 202.0L195 202.0L195 202.0L196 202.0L196 202.0L197 202.0L197 201.9L198 201.9L198 200.5L199 200.5L199 201.4L200 201.4L200 202.2L201 202.2L201 202.0L202 202.0L202 202.0L203 202.0L203 201.9L204 201.9L204 201.9L205 201.9L205 202.2L206 202.2L206 200.1L207 200.1L207 200.6L208 200.6L208 202.1L209 202.1L209 202.1L210 202.1L210 201.5L211 201.5L211 202.1L212 202.1L212 202.2L213 202.2L213 202.2L214 202.2L214 202.1L215 202.1L215 202.0L216 202.0L216 202.1L217 202.1L217 202.0L218 202.0L218 200.8L219 200.8L219 202.1L220 202.1L220 202.1L221 202.1L221 201.9L222 201.9L222 201.9L223 201.9L223 202.2L224 202.2L224 202.0L225 202.0L225 201.1L226 201.1L226 202.0L227 202.0L227 202.2L228 202.2L228 201.0L229 201.0L229 202.0L230 202.0L230 202.2L231 202.2L231 202.0L232 202.0L232 202.1L233 202.1L233 201.3L234 201.3L234 202.0L235 202.0L235 202.1L236 202.1L236 202.1L237 202.1L237 202.1L238 202.1L238 201.9L239 201.9L239 201.6L240 201.6L240 202.1L241 202.1L241 201.9L242 201.9L242 202.0L243 202.0L243 202.0L244 202.0L244 202.2L245 202.2L245 202.1L246 202.1L246 202.0L247 202.0L247 201.9L248 201.9L248 202.1L249 202.1L249 201.9L250 201.9L250 202.1L251 202.1L251 202.1L252 202.1L252 202.0L253 202.0L253 201.9L254 201.9L254 201.9L255 201.9L255 202.2L256 202.2L256 202.0L257 202.0L257 201.9L258 201.9L258 200.3L259 200.3L259 202.2L260 202.2L260 202.0L261 202.0L261 202.2L262 202.2L262 201.9L263 201.9L263 202.0L264 202.0L264 202.0L265 202.0L265 202.0L266 202.0L266 201.9L267 201.9L267 200.9L268 200.9L268 200.4L269 200.4L269 200.0L270 200.0L270 202.2L271 202.2L271 200.7L272 200.7L272 200.6L273 200.6L273 201.9L274 201.9L274 202.1L275 202.1L275 201.0L276 201.0L276 201.9L277 201.9L277 202.0L278 202.0L278 200.1L279 200.1L279 200.8L280 200.8L280 200.4L281 200.4L281 200.6L282 200.6L282 201.9L283 201.9L283 202.2L284 202.2L284 202.0L285 202.0L285 200.3L286 200.3L286 200.7L287 200.7L287 200.2L288 200.2L288 202.1L289 202.1L289 202.0L290 202.0L290 202.4L291 202.4L291 202.4L292 202.4L292 202.4L293 202.4L293 202.4L294 202.4L294 202.4L295 202.4L295 202.4L296 202.4L296 202.4L297 202.4L297 202.4L298 202.4L298 202.5L299 202.5L299 202.5L300 202.5L300 202.5L301 202.5L301 202.5L302 202.5L302 202.5L303 202.5L303 202.5L304 202.5L304 202.5L305 202.5L305 202.5L306 202.5L306 202.5L307 202.5L307 202.5L308 202.5L308 202.5L309 202.5L309 202.5L310 202.5L310 202.5L311 202.5L311 202.5L312 202.5L312 202.5L313 202.5L313 202.5L314 202.5L314 202.5L315 202.5L315 202.5L316 202.5L316 202.5L317 202.5L317 202.5L318 202.5L318 202.5L319 202.5L319 202.5L320 202.5L320 202.5L321 202.5L321 202.5L322 202.5L322 202.5L323 202.5L323 202.5L324 202.5L324 202.5L325 202.5L325 202.5L326 202.5L326 202.5L327 202.5L327 202.5L328 202.5L328 202.5L329 202.5L329 202.5L330 202.5L330 202.5L331 202.5L331 202.5L332 202.5L332 202.5L333 202.5L333 202.5L334 202.5L334 202.5L335 202.5L335 202.5L336 202.5L336 202.5L337 202.5L337 202.5L338 202.5L338 202.5L339 202.5L339 202.5L340 202.5L340 202.5L341 202.5L341 201.2L342 201.2L342 201.2L343 201.2L343 201.2L344 201.2L344 202.5L345 202.5L345 202.5L346 202.5L346 201.2L347 201.2L347 202.5L348 202.5L348 202.5L349 202.5L349 202.5L350 202.5L350 201.2L351 201.2L351 201.2L352 201.2L352 201.2L353 201.2L353 201.2L354 201.2L354 202.5L355 202.5L355 201.2L356 201.2L356 202.5L357 202.5L357 202.5L358 202.5L358 202.5L359 202.5L359 202.5L360 202.5L360 202.5L361 202.5L361 202.5L362 202.5L362 202.5L363 202.5L363 202.5L364 202.5L364 202.5L365 202.5L365 201.2L366 201.2L366 202.5L367 202.5L367 202.5L368 202.5L368 202.5L369 202.5L369 202.5L370 202.5L370 202.5L371 202.5L371 202.5L372 202.5L372 201.2L373 201.2L373 202.5L374 202.5L374 202.5L375 202.5L375 202.5L376 202.5L376 201.2L377 201.2L377 202.5L378 202.5L378 202.5L379 202.5L379 202.5L380 202.5L380 202.5L381 202.5L381 202.5L382 202.5L382 202.5L383 202.5L383 202.5L384 202.5L384 202.5L385 202.5L385 202.5L386 202.5L386 202.5L387 202.5L387 202.5L388 202.5L388 202.5L389 202.5L389 202.5L390 202.5L390 202.5L391 202.5L391 202.5L392 202.5L392 202.5L393 202.5L393 202.5L394 202.5L394 202.5L395 202.5L395 202.5L396 202.5L396 192.6L397 192.6L397 200.2L398 200.2L398 198.1L399 198.1L399 193.6L400 193.6L400 196.3L401 196.3L401 199.2L402 199.2L402 194.6L403 194.6L403 200.3L404 200.3L404 194.0L405 194.0L405 198.6L406 198.6L406 200.3L407 200.3L407 194.9L408 194.9L408 196.2L409 196.2L409 200.5L410 200.5L410 193.8L411 193.8L411 199.6L412 199.6L412 198.6L413 198.6L413 195.2L414 195.2L414 196.5L415 196.5L415 199.2L416 199.2L416 193.7L417 193.7L417 194.6L418 194.6L418 199.0L419 199.0L419 194.2L420 194.2L420 199.6L421 199.6L421 199.2L422 199.2L422 193.6L423 193.6L423 197.6L424 197.6L424 198.8L425 198.8L425 193.9L426 193.9L426 199.3L427 199.3L427 194.1L428 194.1L428 200.0L429 200.0L429 193.7L430 193.7L430 200.0L431 200.0L431 195.3L432 195.3L432 193.6L433 193.6L433 194.7L434 194.7L434 199.6L435 199.6L435 199.1L436 199.1L436 200.5L437 200.5L437 202.5L438 202.5L438 202.0L439 202.0L439 202.3L440 202.3L440 202.5L441 202.5L441 202.0L442 202.0L442 194.6L443 194.6L443 202.3L444 202.3L444 202.0L445 202.0L445 202.5L446 202.5L446 202.6L447 202.6L447 202.7L448 202.7L448 202.2L449 202.2L449 202.0L450 202.0L450 202.2L451 202.2L451 199.1L452 199.1L452 202.4L453 202.4L453 202.5L454 202.5L454 202.2L455 202.2L455 202.6L456 202.6L456 202.2L457 202.2L457 202.4L458 202.4L458 202.0L459 202.0L459 202.5L460 202.5L460 202.0L461 202.0L461 202.5L462 202.5L462 194.8L463 194.8L463 196.1L464 196.1L464 201.3L465 201.3L465 201.5L466 201.5L466 195.3L467 195.3L467 200.1L468 200.1L468 200.9L469 200.9L469 194.7L470 194.7L470 201.1L471 201.1L471 194.6L472 194.6L472 200.9L473 200.9L473 193.5L474 193.5L474 195.0L475 195.0L475 201.0L476 201.0L476 200.4L477 200.4L477 195.4L478 195.4L478 196.6L479 196.6L479 200.8L480 200.8L480 196.0L481 196.0L481 201.3L482 201.3L482 201.6L483 201.6L483 193.9L484 193.9L484 195.4L485 195.4L485 200.7L486 200.7L486 195.8L487 195.8L487 196.9L488 196.9L488 200.4L489 200.4L489 195.0L490 195.0L490 196.3L491 196.3L491 200.1L492 200.1L492 201.0L493 201.0L493 201.6L494 201.6L494 195.0L495 195.0L495 196.3L496 196.3L496 200.5L497 200.5L497 194.5L498 194.5L498 201.1L499 201.1L499 200.1L500 200.1L500 194.3L501 194.3L501 200.3L502 200.3L502 200.3L503 200.3L503 201.1L504 201.1L504 195.4L505 195.4L505 201.4L506 201.4L506 201.3L507 201.3L507 193.4L508 193.4L508 194.9L509 194.9L509 200.6L510 200.6L510 201.2L511 201.2L511 195.0L512 195.0L512 193.6L513 193.6L513 200.2L514 200.2L514 200.5L515 200.5L515 195.1L516 195.1L516 201.2L517 201.2L517 195.0L518 195.0L518 196.2L519 196.2L519 201.2L520 201.2L520 193.6L521 193.6L521 201.4L522 201.4L522 201.2L523 201.2L523 201.0L524 201.0L524 195.2L525 195.2L525 196.5L526 196.5L526 200.8L527 200.8L527 194.2L528 194.2L528 200.6L529 200.6L529 200.3L530 200.3L530 194.9L531 194.9L531 201.2L532 201.2L532 201.2L533 201.2L533 195.6L534 195.6L534 196.8L535 196.8L535 201.4L536 201.4L536 194.6L537 194.6L537 201.6L538 201.6L538 201.6L539 201.6L539 195.1L540 195.1L540 196.4L541 196.4L541 200.7L542 200.7L542 194.4L543 194.4L543 199.3L544 199.3L544 193.6L545 193.6L545 195.3L546 195.3L546 199.4L547 199.4L547 200.9L548 200.9L548 193.4L549 193.4L549 194.9L550 194.9L550 201.2L551 201.2L551 194.7L552 194.7L552 200.1L553 200.1L553 199.3L554 199.3L554 195.2L555 195.2L555 199.3L556 199.3L556 200.9L557 200.9L557 200.2L558 200.2L558 194.0L559 194.0L559 195.4L560 195.4L560 200.2L561 200.2L561 195.7L562 195.7L562 199.7L563 199.7L563 193.7L564 193.7L564 199.6L565 199.6L565 199.8L566 199.8L566 195.1L567 195.1L567 200.1L568 200.1L568 199.8L569 199.8L569 199.5L570 199.5L570 194.2L571 194.2L571 195.6L572 195.6L572 194.2L573 194.2L573 199.3L574 199.3L574 201.1L575 201.1L575 201.0L576 201.0L576 193.4L577 193.4L577 194.9L578 194.9L578 200.5L579 200.5L579 195.2L580 195.2L580 199.2L581 199.2L581 199.8L582 199.8L582 195.5L583 195.5L583 196.7L584 196.7L584 193.6L585 193.6L585 195.6L586 195.6L586 195.0L587 195.0L587 196.3L588 196.3L588 198.4L589 198.4L589 194.2L590 194.2L590 199.4L591 199.4L591 195.4L592 195.4L592 199.9L593 199.9L593 198.4L594 198.4L594 193.6L595 193.6L595 195.1L596 195.1L596 194.7L597 194.7L597 196.1L598 196.1L598 193.4L599 193.4L599 198.5L600 198.5L600 192.9L601 192.9L601 194.5L602 194.5L602 193.6L603 193.6L603 193.8L604 193.8L604 198.5L605 198.5L605 196.8L606 196.8L606 193.5L607 193.5L607 197.5L608 197.5L608 199.4L609 199.4L609 195.6L610 195.6L610 193.6L611 193.6L611 194.7L612 194.7L612 198.3L613 198.3L613 193.6L614 193.6L614 196.6L615 196.6L615 192.8L616 192.8L616 197.6L617 197.6L617 192.6L618 192.6L618 194.6L619 194.6L619 197.5L620 197.5L620 194.5L621 194.5L621 202.3L622 202.3L622 202.2L623 202.2L623 202.3L624 202.3L624 202.0L625 202.0L625 202.3L626 202.3L626 202.1L627 202.1L627 199.6L628 199.6L628 202.4L629 202.4L629 202.6L630 202.6L630 202.3L631 202.3L631 202.1L632 202.1L632 202.0L633 202.0L633 202.1L634 202.1L634 202.0L635 202.0L635 202.0L636 202.0L636 195.1L637 195.1L637 202.4L638 202.4L638 202.1L639 202.1L639 202.5L640 202.5L640 202.6L641 202.6L641 202.1L642 202.1L642 202.5L643 202.5L643 202.1L644 202.1L644 202.3L645 202.3L645 202.1L646 202.1L646 202.4L647 202.4L647 202.7L648 202.7L648 202.1L649 202.1L649 202.6L650 202.6L650 194.4L651 194.4L651 201.3L652 201.3L652 194.1L653 194.1L653 194.9L654 194.9L654 196.2L655 196.2L655 200.7L656 200.7L656 194.2L657 194.2L657 193.1L658 193.1L658 201.1L659 201.1L659 194.0L660 194.0L660 196.6L661 196.6L661 201.0L662 201.0L662 194.7L663 194.7L663 201.3L664 201.3L664 194.1L665 194.1L665 194.2L666 194.2L666 200.5L667 200.5L667 201.0L668 201.0L668 201.0L669 201.0L669 194.1L670 194.1L670 196.5L671 196.5L671 200.2L672 200.2L672 202.4L673 202.4L673 202.1L674 202.1L674 202.3L675 202.3L675 202.6L676 202.6L676 202.6L677 202.6L677 202.4L678 202.4L678 202.2L679 202.2L679 202.0L680 202.0L680 202.7L681 202.7L681 202.3L682 202.3L682 202.4L683 202.4L683 202.2L684 202.2L684 202.0L685 202.0L685 195.1L686 195.1L686 202.1L687 202.1L687 202.2L688 202.2L688 202.7L689 202.7L689 202.4L690 202.4L690 195.4L691 195.4L691 200.5L692 200.5L692 201.4L693 201.4L693 195.3L694 195.3L694 201.5L695 201.5L695 201.7L696 201.7L696 200.2L697 200.2L697 194.6L698 194.6L698 201.2L699 201.2L699 201.5L700 201.5L700 194.6L701 194.6L701 196.0L702 196.0L702 201.3L703 201.3L703 200.8L704 200.8L704 193.7L705 193.7L705 201.0L706 201.0L706 200.3L707 200.3L707 201.0L708 201.0L708 194.0L709 194.0L709 201.6L710 201.6L710 201.2L711 201.2L711 195.9L712 195.9L712 197.0L713 197.0L713 194.3L714 194.3L714 200.9L715 200.9L715 201.0L716 201.0L716 200.5L717 200.5L717 201.1L718 201.1L718 194.9L719 194.9L719 201.6L720 201.6L720 195.4L721 195.4L721 196.6L722 196.6L722 200.5L723 200.5L723 193.4L724 193.4L724 201.1L725 201.1L725 201.1L726 201.1L726 200.7L727 200.7L727 194.6L728 194.6L728 196.0L729 196.0L729 195.1L730 195.1L730 201.5L731 201.5L731 200.3L732 200.3L732 193.9L733 193.9L733 201.6L734 201.6L734 200.8L735 200.8L735 193.5L736 193.5L736 195.0L737 195.0L737 200.6L738 200.6L738 200.2L739 200.2L739 194.0L740 194.0L740 201.5L741 201.5L741 200.5L742 200.5L742 193.1L743 193.1L743 195.6L744 195.6L744 200.8L745 200.8L745 194.6L746 194.6L746 200.9L747 200.9L747 194.2L748 194.2L748 201.9L749 201.9L749 202.2L750 202.2L750 202.1L751 202.1L751 202.1L752 202.1L752 202.1L753 202.1L753 205.3L752 205.3L752 205.3L751 205.3L751 205.6L750 205.6L750 205.7L749 205.7L749 205.8L748 205.8L748 215.0L747 215.0L747 205.6L746 205.6L746 214.3L745 214.3L745 207.0L744 207.0L744 208.8L743 208.8L743 218.6L742 218.6L742 205.6L741 205.6L741 206.0L740 206.0L740 211.0L739 211.0L739 205.6L738 205.6L738 207.1L737 207.1L737 209.7L736 209.7L736 213.7L735 213.7L735 207.0L734 207.0L734 206.5L733 206.5L733 212.9L732 212.9L732 206.0L731 206.0L731 207.1L730 207.1L730 226.1L729 226.1L729 209.7L728 209.7L728 213.7L727 213.7L727 206.5L726 206.5L726 206.0L725 206.0L725 206.5L724 206.5L724 208.4L723 208.4L723 206.3L722 206.3L722 206.9L721 206.9L721 209.1L720 209.1L720 206.4L719 206.4L719 211.6L718 211.6L718 206.2L717 206.2L717 205.9L716 205.9L716 206.0L715 206.0L715 207.0L714 207.0L714 214.7L713 214.7L713 208.2L712 208.2L712 211.3L711 211.3L711 207.1L710 207.1L710 205.7L709 205.7L709 213.4L708 213.4L708 205.5L707 205.5L707 207.1L706 207.1L706 206.5L705 206.5L705 209.5L704 209.5L704 206.3L703 206.3L703 206.2L702 206.2L702 207.7L701 207.7L701 210.4L700 210.4L700 206.4L699 206.4L699 206.3L698 206.3L698 212.2L697 212.2L697 207.0L696 207.0L696 206.9L695 206.9L695 206.3L694 206.3L694 214.1L693 214.1L693 206.6L692 206.6L692 205.7L691 205.7L691 211.0L690 211.0L690 205.0L689 205.0L689 204.8L688 204.8L688 205.2L687 205.2L687 205.0L686 205.0L686 214.1L685 214.1L685 205.2L684 205.2L684 205.0L683 205.0L683 204.7L682 204.7L682 204.8L681 204.8L681 205.0L680 205.0L680 205.2L679 205.2L679 204.8L678 204.8L678 205.0L677 205.0L677 204.8L676 204.8L676 205.2L675 205.2L675 204.9L674 204.9L674 205.1L673 205.1L673 204.8L672 204.8L672 205.9L671 205.9L671 211.0L670 211.0L670 215.6L669 215.6L669 206.0L668 206.0L668 205.6L667 205.6L667 206.5L666 206.5L666 213.7L665 213.7L665 225.1L664 225.1L664 206.4L663 206.4L663 218.1L662 218.1L662 206.8L661 206.8L661 212.6L660 212.6L660 212.8L659 212.8L659 205.8L658 205.8L658 225.1L657 225.1L657 213.8L656 213.8L656 206.6L655 206.6L655 207.3L654 207.3L654 209.7L653 209.7L653 215.6L652 215.6L652 206.5L651 206.5L651 217.7L650 217.7L650 204.6L649 204.6L649 205.1L648 205.1L648 204.8L647 204.8L647 204.6L646 204.6L646 204.6L645 204.6L645 205.2L644 205.2L644 205.1L643 205.1L643 205.1L642 205.1L642 204.9L641 204.9L641 204.9L640 204.9L640 205.0L639 205.0L639 204.6L638 204.6L638 204.9L637 204.9L637 213.6L636 213.6L636 205.0L635 205.0L635 204.5L634 204.5L634 204.9L633 204.9L633 205.1L632 205.1L632 205.0L631 205.0L631 204.7L630 204.7L630 205.2L629 205.2L629 205.2L628 205.2L628 207.6L627 207.6L627 204.7L626 204.7L626 205.2L625 205.2L625 204.6L624 204.6L624 204.9L623 204.9L623 204.8L622 204.8L622 204.5L621 204.5L621 213.7L620 213.7L620 209.0L619 209.0L619 225.6L618 225.6L618 234.6L617 234.6L617 208.2L616 208.2L616 212.8L615 212.8L615 208.5L614 208.5L614 213.1L613 213.1L613 210.6L612 210.6L612 219.6L611 219.6L611 229.6L610 229.6L610 216.8L609 216.8L609 208.0L608 208.0L608 208.1L607 208.1L607 213.5L606 213.5L606 208.5L605 208.5L605 208.4L604 208.4L604 220.2L603 220.2L603 225.6L602 225.6L602 210.8L601 210.8L601 215.6L600 215.6L600 208.5L599 208.5L599 217.3L598 217.3L598 210.5L597 210.5L597 215.1L596 215.1L596 208.5L595 208.5L595 211.8L594 211.8L594 209.1L593 209.1L593 208.9L592 208.9L592 215.5L591 215.5L591 207.6L590 207.6L590 219.8L589 219.8L589 207.4L588 207.4L588 210.3L587 210.3L587 214.8L586 214.8L586 225.6L585 225.6L585 234.6L584 234.6L584 207.8L583 207.8L583 210.6L582 210.6L582 207.1L581 207.1L581 206.8L580 206.8L580 213.1L579 213.1L579 206.6L578 206.6L578 207.8L577 207.8L577 210.7L576 210.7L576 206.1L575 206.1L575 207.4L574 207.4L574 208.0L573 208.0L573 213.4L572 213.4L572 208.4L571 208.4L571 211.7L570 211.7L570 207.6L569 207.6L569 207.2L568 207.2L568 206.8L567 206.8L567 216.4L566 216.4L566 206.5L565 206.5L565 206.8L564 206.8L564 210.1L563 210.1L563 207.0L562 207.0L562 215.9L561 215.9L561 206.3L560 206.3L560 210.1L559 210.1L559 214.4L558 214.4L558 207.1L557 207.1L557 207.2L556 207.2L556 207.6L555 207.6L555 216.0L554 216.0L554 206.7L553 206.7L553 207.7L552 207.7L552 215.5L551 215.5L551 207.1L550 207.1L550 208.0L549 208.0L549 210.9L548 210.9L548 207.0L547 207.0L547 206.1L546 206.1L546 217.1L545 217.1L545 223.6L544 223.6L544 207.5L543 207.5L543 218.2L542 218.2L542 207.3L541 207.3L541 208.6L540 208.6L540 211.9L539 211.9L539 206.3L538 206.3L538 206.2L537 206.2L537 221.6L536 221.6L536 206.5L535 206.5L535 210.8L534 210.8L534 215.6L533 215.6L533 205.8L532 205.8L532 206.3L531 206.3L531 213.1L530 213.1L530 205.9L529 205.9L529 207.0L528 207.0L528 217.9L527 217.9L527 206.8L526 206.8L526 209.1L525 209.1L525 212.7L524 212.7L524 206.1L523 206.1L523 206.7L522 206.7L522 205.8L521 205.8L521 224.6L520 224.6L520 206.2L519 206.2L519 208.5L518 208.5L518 211.7L517 211.7L517 206.8L516 206.8L516 213.1L515 213.1L515 206.7L514 206.7L514 206.1L513 206.1L513 221.6L512 221.6L512 217.9L511 217.9L511 205.5L510 205.5L510 206.1L509 206.1L509 210.9L508 210.9L508 215.7L507 215.7L507 206.3L506 206.3L506 205.8L505 205.8L505 212.7L504 212.7L504 206.9L503 206.9L503 206.3L502 206.3L502 206.5L501 206.5L501 210.1L500 210.1L500 206.5L499 206.5L499 206.1L498 206.1L498 211.8L497 211.8L497 206.7L496 206.7L496 208.8L495 208.8L495 212.3L494 212.3L494 205.9L493 205.9L493 206.7L492 206.7L492 205.8L491 205.8L491 208.4L490 208.4L490 211.5L489 211.5L489 206.8L488 206.8L488 211.6L487 211.6L487 217.0L486 217.0L486 206.4L485 206.4L485 208.5L484 208.5L484 211.7L483 211.7L483 207.0L482 207.0L482 206.8L481 206.8L481 214.1L480 214.1L480 206.9L479 206.9L479 210.3L478 210.3L478 214.8L477 214.8L477 206.8L476 206.8L476 206.8L475 206.8L475 208.1L474 208.1L474 211.2L473 211.2L473 206.9L472 206.9L472 223.6L471 223.6L471 206.6L470 206.6L470 211.2L469 211.2L469 206.7L468 206.7L468 205.6L467 205.6L467 214.5L466 214.5L466 206.0L465 206.0L465 206.8L464 206.8L464 210.1L463 210.1L463 214.4L462 214.4L462 205.0L461 205.0L461 205.0L460 205.0L460 204.7L459 204.7L459 204.9L458 204.9L458 205.0L457 205.0L457 205.1L456 205.1L456 204.7L455 204.7L455 204.6L454 204.6L454 204.7L453 204.7L453 204.6L452 204.6L452 207.6L451 207.6L451 204.6L450 204.6L450 205.2L449 205.2L449 204.7L448 204.7L448 204.6L447 204.6L447 205.2L446 205.2L446 205.0L445 205.0L445 205.2L444 205.2L444 204.6L443 204.6L443 213.1L442 213.1L442 204.6L441 204.6L441 205.2L440 205.2L440 204.7L439 204.7L439 205.2L438 205.2L438 204.9L437 204.9L437 208.8L436 208.8L436 206.7L435 206.7L435 207.5L434 207.5L434 211.3L433 211.3L433 234.6L432 234.6L432 218.9L431 218.9L431 208.5L430 208.5L430 219.7L429 219.7L429 206.8L428 206.8L428 213.1L427 213.1L427 207.6L426 207.6L426 211.3L425 211.3L425 208.1L424 208.1L424 223.6L423 223.6L423 237.6L422 237.6L422 208.9L421 208.9L421 207.7L420 207.7L420 221.0L419 221.0L419 208.3L418 208.3L418 227.6L417 227.6L417 212.1L416 212.1L416 207.4L415 207.4L415 210.2L414 210.2L414 214.7L413 214.7L413 206.6L412 206.6L412 208.1L411 208.1L411 213.8L410 213.8L410 207.1L409 207.1L409 211.4L408 211.4L408 216.6L407 216.6L407 208.7L406 208.7L406 208.1L405 208.1L405 213.4L404 213.4L404 208.9L403 208.9L403 215.5L402 215.5L402 208.3L401 208.3L401 213.8L400 213.8L400 228.6L399 228.6L399 207.9L398 207.9L398 208.4L397 208.4L397 211.6L396 211.6L396 204.7L395 204.7L395 204.7L394 204.7L394 204.7L393 204.7L393 204.7L392 204.7L392 204.7L391 204.7L391 204.7L390 204.7L390 204.7L389 204.7L389 204.7L388 204.7L388 204.7L387 204.7L387 204.7L386 204.7L386 204.7L385 204.7L385 204.7L384 204.7L384 204.7L383 204.7L383 204.7L382 204.7L382 204.7L381 204.7L381 204.7L380 204.7L380 204.7L379 204.7L379 204.7L378 204.7L378 204.7L377 204.7L377 204.7L376 204.7L376 204.7L375 204.7L375 204.7L374 204.7L374 204.7L373 204.7L373 204.7L372 204.7L372 204.7L371 204.7L371 204.7L370 204.7L370 204.7L369 204.7L369 204.7L368 204.7L368 204.7L367 204.7L367 204.7L366 204.7L366 204.7L365 204.7L365 204.7L364 204.7L364 204.7L363 204.7L363 204.7L362 204.7L362 204.7L361 204.7L361 204.7L360 204.7L360 204.7L359 204.7L359 204.7L358 204.7L358 204.7L357 204.7L357 204.7L356 204.7L356 204.7L355 204.7L355 204.7L354 204.7L354 204.7L353 204.7L353 204.7L352 204.7L352 204.7L351 204.7L351 204.7L350 204.7L350 204.7L349 204.7L349 204.7L348 204.7L348 204.7L347 204.7L347 204.7L346 204.7L346 204.7L345 204.7L345 204.7L344 204.7L344 204.7L343 204.7L343 204.7L342 204.7L342 204.7L341 204.7L341 204.7L340 204.7L340 204.7L339 204.7L339 204.7L338 204.7L338 204.7L337 204.7L337 204.7L336 204.7L336 204.7L335 204.7L335 204.7L334 204.7L334 204.7L333 204.7L333 204.7L332 204.7L332 204.7L331 204.7L331 204.7L330 204.7L330 204.7L329 204.7L329 204.7L328 204.7L328 204.7L327 204.7L327 204.7L326 204.7L326 204.7L325 204.7L325 204.7L324 204.7L324 204.7L323 204.7L323 204.7L322 204.7L322 204.7L321 204.7L321 204.7L320 204.7L320 204.7L319 204.7L319 204.7L318 204.7L318 204.7L317 204.7L317 204.7L316 204.7L316 204.7L315 204.7L315 204.7L314 204.7L314 204.7L313 204.7L313 204.7L312 204.7L312 204.7L311 204.7L311 204.7L310 204.7L310 204.7L309 204.7L309 204.7L308 204.7L308 204.7L307 204.7L307 204.7L306 204.7L306 204.7L305 204.7L305 204.7L304 204.7L304 204.7L303 204.7L303 204.7L302 204.7L302 204.7L301 204.7L301 204.7L300 204.7L300 204.7L299 204.7L299 204.7L298 204.7L298 204.8L297 204.8L297 204.8L296 204.8L296 204.8L295 204.8L295 204.8L294 204.8L294 204.8L293 204.8L293 204.8L292 204.8L292 204.8L291 204.8L291 204.8L290 204.8L290 205.0L289 205.0L289 205.1L288 205.1L288 206.1L287 206.1L287 205.9L286 205.9L286 206.1L285 206.1L285 205.3L284 205.3L284 205.1L283 205.1L283 205.0L282 205.0L282 206.6L281 206.6L281 206.2L280 206.2L280 207.2L279 207.2L279 206.9L278 206.9L278 205.1L277 205.1L277 205.3L276 205.3L276 206.0L275 206.0L275 205.1L274 205.1L274 205.1L273 205.1L273 206.6L272 206.6L272 206.1L271 206.1L271 205.0L270 205.0L270 207.0L269 207.0L269 206.4L268 206.4L268 207.3L267 207.3L267 205.3L266 205.3L266 205.3L265 205.3L265 205.3L264 205.3L264 205.1L263 205.1L263 205.1L262 205.1L262 205.3L261 205.3L261 205.2L260 205.2L260 205.2L259 205.2L259 206.8L258 206.8L258 205.0L257 205.0L257 205.3L256 205.3L256 205.2L255 205.2L255 205.3L254 205.3L254 205.2L253 205.2L253 205.3L252 205.3L252 205.1L251 205.1L251 205.1L250 205.1L250 205.3L249 205.3L249 205.1L248 205.1L248 205.1L247 205.1L247 205.3L246 205.3L246 205.0L245 205.0L245 205.1L244 205.1L244 205.2L243 205.2L243 205.0L242 205.0L242 205.0L241 205.0L241 205.2L240 205.2L240 206.6L239 206.6L239 205.1L238 205.1L238 205.2L237 205.2L237 205.2L236 205.2L236 205.1L235 205.1L235 205.3L234 205.3L234 207.0L233 207.0L233 205.0L232 205.0L232 205.2L231 205.2L231 205.0L230 205.0L230 205.0L229 205.0L229 206.1L228 206.1L228 205.3L227 205.3L227 205.3L226 205.3L226 206.1L225 206.1L225 205.1L224 205.1L224 205.3L223 205.3L223 205.2L222 205.2L222 205.2L221 205.2L221 205.2L220 205.2L220 205.2L219 205.2L219 205.7L218 205.7L218 205.0L217 205.0L217 205.3L216 205.3L216 205.3L215 205.3L215 205.3L214 205.3L214 205.3L213 205.3L213 205.3L212 205.3L212 205.3L211 205.3L211 206.7L210 206.7L210 205.2L209 205.2L209 205.2L208 205.2L208 206.6L207 206.6L207 206.3L206 206.3L206 205.1L205 205.1L205 205.0L204 205.0L204 205.0L203 205.0L203 205.3L202 205.3L202 205.2L201 205.2L201 205.1L200 205.1L200 206.2L199 206.2L199 207.0L198 207.0L198 205.2L197 205.2L197 205.2L196 205.2L196 205.1L195 205.1L195 205.0L194 205.0L194 205.1L193 205.1L193 205.1L192 205.1L192 205.1L191 205.1L191 205.2L190 205.2L190 205.1L189 205.1L189 205.2L188 205.2L188 205.3L187 205.3L187 205.2L186 205.2L186 205.3L185 205.3L185 206.9L184 206.9L184 205.1L183 205.1L183 205.0L182 205.0L182 205.0L181 205.0L181 205.2L180 205.2L180 205.3L179 205.3L179 205.0L178 205.0L178 205.3L177 205.3L177 205.0L176 205.0L176 205.2L175 205.2L175 205.6L174 205.6L174 205.3L173 205.3L173 205.3L172 205.3L172 206.7L171 206.7L171 205.3L170 205.3L170 205.0L169 205.0L169 206.6L168 206.6L168 205.3L167 205.3L167 205.1L166 205.1L166 205.3L165 205.3L165 205.3L164 205.3L164 205.2L163 205.2L163 205.0L162 205.0L162 205.1L161 205.1L161 205.2L160 205.2L160 205.2L159 205.2L159 208.1L158 208.1L158 205.1L157 205.1L157 205.0L156 205.0L156 205.0L155 205.0L155 205.0L154 205.0L154 205.3L153 205.3L153 205.0L152 205.0L152 205.3L151 205.3L151 206.3L150 206.3L150 205.3L149 205.3L149 207.6L148 207.6L148 205.0L147 205.0L147 205.3L146 205.3L146 205.3L145 205.3L145 205.1L144 205.1L144 205.2L143 205.2L143 205.1L142 205.1L142 205.0L141 205.0L141 205.3L140 205.3L140 208.1L139 208.1L139 205.0L138 205.0L138 205.0L137 205.0L137 205.7L136 205.7L136 205.1L135 205.1L135 205.3L134 205.3L134 205.3L133 205.3L133 207.6L132 207.6L132 209.6L131 209.6L131 205.2L130 205.2L130 205.1L129 205.1L129 205.3L128 205.3L128 205.3L127 205.3L127 205.0L126 205.0L126 208.1L125 208.1L125 205.1L124 205.1L124 205.2L123 205.2L123 205.1L122 205.1L122 206.6L121 206.6L121 205.2L120 205.2L120 205.2L119 205.2L119 206.2L118 206.2L118 205.0L117 205.0L117 205.0L116 205.0L116 205.2L115 205.2L115 205.5L114 205.5L114 205.3L113 205.3L113 205.2L112 205.2L112 205.1L111 205.1L111 209.1L110 209.1L110 205.3L109 205.3L109 205.0L108 205.0L108 205.1L107 205.1L107 205.3L106 205.3L106 205.2L105 205.2L105 205.1L104 205.1L104 205.0L103 205.0L103 205.1L102 205.1L102 205.3L101 205.3L101 205.2L100 205.2L100 205.2L99 205.2L99 205.0L98 205.0L98 205.2L97 205.2L97 205.2L96 205.2L96 207.2L95 207.2L95 205.2L94 205.2L94 205.3L93 205.3L93 205.3L92 205.3L92 205.3L91 205.3L91 205.2L90 205.2L90 205.2L89 205.2L89 205.1L88 205.1L88 206.6L87 206.6L87 205.0L86 205.0L86 205.2L85 205.2L85 205.3L84 205.3L84 205.0L83 205.0L83 206.1L82 206.1L82 206.2L81 206.2L81 205.2L80 205.2L80 206.6L79 206.6L79 205.2L78 205.2L78 205.2L77 205.2L77 205.0L76 205.0L76 205.2L75 205.2L75 205.0L74 205.0L74 205.0L73 205.0L73 205.3L72 205.3L72 205.3L71 205.3L71 205.3L70 205.3L70 205.2L69 205.2L69 206.4L68 206.4L68 205.1L67 205.1L67 205.0L66 205.0L66 207.1L65 207.1L65 205.1L64 205.1L64 205.1L63 205.1L63 205.0L62 205.0L62 205.2L61 205.2L61 205.2L60 205.2L60 205.0L59 205.0L59 205.0L58 205.0L58 207.0L57 207.0L57 205.0L56 205.0L56 205.1L55 205.1L55 205.0L54 205.0L54 205.1L53 205.1L53 206.2L52 206.2L52 205.2L51 205.2L51 205.3L50 205.3L50 205.2L49 205.2L49 205.2L48 205.2L48 205.1L47 205.1L47 206.0L46 206.0L46 205.2L45 205.2L45 205.3L44 205.3L44 205.3L43 205.3L43 205.0L42 205.0L42 205.2L41 205.2L41 205.2L40 205.2L40 220.6L39 220.6Z" fill="#0c1060"/><path d="M39 392.8L40 392.8L40 393.9L41 393.9L41 393.8L42 393.8L42 393.7L43 393.7L43 393.9L44 393.9L44 393.6L45 393.6L45 393.9L46 393.9L46 393.2L47 393.2L47 393.7L48 393.7L48 393.6L49 393.6L49 393.9L50 393.9L50 393.1L51 393.1L51 393.8L52 393.8L52 392.2L53 392.2L53 393.6L54 393.6L54 393.8L55 393.8L55 393.9L56 393.9L56 393.7L57 393.7L57 393.9L58 393.9L58 393.7L59 393.7L59 393.8L60 393.8L60 393.7L61 393.7L61 393.9L62 393.9L62 393.7L63 393.7L63 393.9L64 393.9L64 385.3L65 385.3L65 389.3L66 389.3L66 392.3L67 392.3L67 393.9L68 393.9L68 393.3L69 393.3L69 393.6L70 393.6L70 393.9L71 393.9L71 393.6L72 393.6L72 392.3L73 392.3L73 393.8L74 393.8L74 393.9L75 393.9L75 393.8L76 393.8L76 391.8L77 391.8L77 393.8L78 393.8L78 393.7L79 393.7L79 393.8L80 393.8L80 393.6L81 393.6L81 393.6L82 393.6L82 391.3L83 391.3L83 393.6L84 393.6L84 393.8L85 393.8L85 393.9L86 393.9L86 393.6L87 393.6L87 393.7L88 393.7L88 393.9L89 393.9L89 393.6L90 393.6L90 393.7L91 393.7L91 393.7L92 393.7L92 393.8L93 393.8L93 393.9L94 393.9L94 393.7L95 393.7L95 392.3L96 392.3L96 393.9L97 393.9L97 393.9L98 393.9L98 393.9L99 393.9L99 393.9L100 393.9L100 393.6L101 393.6L101 393.9L102 393.9L102 393.6L103 393.6L103 393.6L104 393.6L104 393.7L105 393.7L105 390.8L106 390.8L106 392.3L107 392.3L107 393.7L108 393.7L108 393.8L109 393.8L109 393.9L110 393.9L110 391.8L111 391.8L111 393.6L112 393.6L112 393.6L113 393.6L113 393.9L114 393.9L114 393.7L115 393.7L115 393.7L116 393.7L116 393.8L117 393.8L117 393.6L118 393.6L118 393.8L119 393.8L119 393.9L120 393.9L120 393.6L121 393.6L121 393.8L122 393.8L122 393.6L123 393.6L123 393.2L124 393.2L124 393.7L125 393.7L125 391.8L126 391.8L126 393.7L127 393.7L127 393.7L128 393.7L128 393.7L129 393.7L129 393.7L130 393.7L130 393.8L131 393.8L131 385.3L132 385.3L132 390.3L133 390.3L133 393.6L134 393.6L134 393.8L135 393.8L135 393.0L136 393.0L136 393.9L137 393.9L137 393.9L138 393.9L138 393.6L139 393.6L139 390.8L140 390.8L140 391.8L141 391.8L141 393.6L142 393.6L142 392.4L143 392.4L143 393.6L144 393.6L144 393.8L145 393.8L145 392.9L146 392.9L146 391.3L147 391.3L147 392.3L148 392.3L148 391.3L149 391.3L149 393.7L150 393.7L150 392.3L151 392.3L151 393.9L152 393.9L152 393.7L153 393.7L153 393.9L154 393.9L154 393.9L155 393.9L155 393.7L156 393.7L156 393.8L157 393.8L157 391.3L158 391.3L158 390.8L159 390.8L159 393.8L160 393.8L160 393.8L161 393.8L161 393.8L162 393.8L162 393.9L163 393.9L163 393.8L164 393.8L164 393.7L165 393.7L165 393.8L166 393.8L166 393.9L167 393.9L167 393.7L168 393.7L168 391.3L169 391.3L169 393.8L170 393.8L170 393.6L171 393.6L171 393.7L172 393.7L172 393.7L173 393.7L173 393.8L174 393.8L174 393.6L175 393.6L175 392.3L176 392.3L176 393.8L177 393.8L177 393.1L178 393.1L178 393.9L179 393.9L179 393.8L180 393.8L180 393.6L181 393.6L181 393.6L182 393.6L182 393.7L183 393.7L183 391.8L184 391.8L184 393.6L185 393.6L185 393.6L186 393.6L186 393.9L187 393.9L187 392.5L188 392.5L188 393.8L189 393.8L189 393.7L190 393.7L190 391.8L191 391.8L191 393.6L192 393.6L192 393.9L193 393.9L193 393.7L194 393.7L194 393.8L195 393.8L195 393.7L196 393.7L196 393.6L197 393.6L197 393.8L198 393.8L198 393.9L199 393.9L199 393.7L200 393.7L200 392.3L201 392.3L201 393.6L202 393.6L202 393.8L203 393.8L203 393.7L204 393.7L204 393.6L205 393.6L205 393.6L206 393.6L206 385.3L207 385.3L207 390.3L208 390.3L208 392.3L209 392.3L209 393.7L210 393.7L210 393.8L211 393.8L211 393.6L212 393.6L212 393.6L213 393.6L213 390.8L214 390.8L214 392.3L215 392.3L215 393.6L216 393.6L216 393.6L217 393.6L217 393.8L218 393.8L218 393.6L219 393.6L219 393.2L220 393.2L220 393.6L221 393.6L221 393.7L222 393.7L222 393.7L223 393.7L223 393.7L224 393.7L224 392.3L225 392.3L225 392.8L226 392.8L226 393.7L227 393.7L227 393.7L228 393.7L228 393.8L229 393.8L229 393.6L230 393.6L230 393.9L231 393.9L231 393.8L232 393.8L232 393.9L233 393.9L233 391.7L234 391.7L234 393.7L235 393.7L235 393.6L236 393.6L236 391.8L237 391.8L237 393.9L238 393.9L238 393.9L239 393.9L239 393.6L240 393.6L240 393.8L241 393.8L241 393.9L242 393.9L242 391.7L243 391.7L243 393.7L244 393.7L244 393.9L245 393.9L245 391.3L246 391.3L246 392.6L247 392.6L247 393.9L248 393.9L248 393.6L249 393.6L249 393.9L250 393.9L250 393.7L251 393.7L251 393.8L252 393.8L252 393.6L253 393.6L253 393.9L254 393.9L254 393.6L255 393.6L255 391.8L256 391.8L256 393.6L257 393.6L257 393.6L258 393.6L258 391.9L259 391.9L259 393.8L260 393.8L260 393.6L261 393.6L261 393.7L262 393.7L262 391.3L263 391.3L263 393.2L264 393.2L264 392.6L265 392.6L265 393.1L266 393.1L266 392.6L267 392.6L267 393.7L268 393.7L268 391.8L269 391.8L269 391.1L270 391.1L270 392.2L271 392.2L271 392.3L272 392.3L272 390.8L273 390.8L273 393.9L274 393.9L274 393.9L275 393.9L275 393.7L276 393.7L276 390.3L277 390.3L277 391.8L278 391.8L278 392.7L279 392.7L279 393.7L280 393.7L280 390.8L281 390.8L281 392.3L282 392.3L282 391.2L283 391.2L283 392.0L284 392.0L284 391.3L285 391.3L285 391.5L286 391.5L286 393.6L287 393.6L287 392.3L288 392.3L288 393.6L289 393.6L289 392.6L290 392.6L290 394.1L291 394.1L291 394.1L292 394.1L292 394.1L293 394.1L293 394.1L294 394.1L294 394.1L295 394.1L295 394.1L296 394.1L296 394.1L297 394.1L297 394.1L298 394.1L298 394.2L299 394.2L299 394.2L300 394.2L300 394.2L301 394.2L301 394.2L302 394.2L302 394.2L303 394.2L303 394.2L304 394.2L304 394.2L305 394.2L305 394.2L306 394.2L306 394.2L307 394.2L307 394.2L308 394.2L308 394.2L309 394.2L309 394.2L310 394.2L310 394.2L311 394.2L311 394.2L312 394.2L312 394.2L313 394.2L313 394.2L314 394.2L314 394.2L315 394.2L315 394.2L316 394.2L316 394.2L317 394.2L317 394.2L318 394.2L318 394.2L319 394.2L319 394.2L320 394.2L320 394.2L321 394.2L321 394.2L322 394.2L322 394.2L323 394.2L323 394.2L324 394.2L324 394.2L325 394.2L325 394.2L326 394.2L326 394.2L327 394.2L327 394.2L328 394.2L328 394.2L329 394.2L329 394.2L330 394.2L330 394.2L331 394.2L331 394.2L332 394.2L332 394.2L333 394.2L333 394.2L334 394.2L334 394.2L335 394.2L335 394.2L336 394.2L336 394.2L337 394.2L337 394.2L338 394.2L338 394.2L339 394.2L339 394.2L340 394.2L340 394.2L341 394.2L341 394.2L342 394.2L342 394.2L343 394.2L343 392.9L344 392.9L344 394.2L345 394.2L345 394.2L346 394.2L346 394.2L347 394.2L347 394.2L348 394.2L348 394.2L349 394.2L349 392.9L350 392.9L350 392.9L351 392.9L351 394.2L352 394.2L352 394.2L353 394.2L353 394.2L354 394.2L354 394.2L355 394.2L355 394.2L356 394.2L356 394.2L357 394.2L357 392.9L358 392.9L358 394.2L359 394.2L359 392.9L360 392.9L360 394.2L361 394.2L361 394.2L362 394.2L362 394.2L363 394.2L363 394.2L364 394.2L364 392.9L365 392.9L365 394.2L366 394.2L366 394.2L367 394.2L367 394.2L368 394.2L368 394.2L369 394.2L369 394.2L370 394.2L370 392.9L371 392.9L371 394.2L372 394.2L372 394.2L373 394.2L373 394.2L374 394.2L374 394.2L375 394.2L375 394.2L376 394.2L376 394.2L377 394.2L377 394.2L378 394.2L378 394.2L379 394.2L379 394.2L380 394.2L380 392.9L381 392.9L381 394.2L382 394.2L382 394.2L383 394.2L383 394.2L384 394.2L384 394.2L385 394.2L385 394.2L386 394.2L386 394.2L387 394.2L387 394.2L388 394.2L388 394.2L389 394.2L389 394.2L390 394.2L390 394.2L391 394.2L391 394.2L392 394.2L392 394.2L393 394.2L393 394.2L394 394.2L394 394.2L395 394.2L395 394.2L396 394.2L396 384.3L397 384.3L397 391.9L398 391.9L398 391.7L399 391.7L399 385.3L400 385.3L400 387.1L401 387.1L401 391.6L402 391.6L402 386.4L403 386.4L403 391.9L404 391.9L404 390.2L405 390.2L405 386.5L406 386.5L406 387.8L407 387.8L407 385.2L408 385.2L408 386.7L409 386.7L409 387.0L410 387.0L410 390.4L411 390.4L411 390.3L412 390.3L412 385.0L413 385.0L413 390.9L414 390.9L414 384.8L415 384.8L415 391.1L416 391.1L416 390.7L417 390.7L417 386.3L418 386.3L418 391.9L419 391.9L419 387.0L420 387.0L420 390.5L421 390.5L421 385.3L422 385.3L422 387.3L423 387.3L423 389.3L424 389.3L424 386.1L425 386.1L425 387.4L426 387.4L426 384.9L427 384.9L427 392.0L428 392.0L428 386.7L429 386.7L429 391.5L430 391.5L430 386.2L431 386.2L431 389.9L432 389.9L432 385.3L433 385.3L433 387.1L434 387.1L434 390.6L435 390.6L435 390.0L436 390.0L436 385.0L437 385.0L437 393.7L438 393.7L438 394.1L439 394.1L439 394.0L440 394.0L440 394.0L441 394.0L441 393.9L442 393.9L442 386.3L443 386.3L443 394.1L444 394.1L444 394.1L445 394.1L445 394.0L446 394.0L446 394.1L447 394.1L447 394.0L448 394.0L448 393.9L449 393.9L449 394.1L450 394.1L450 393.7L451 393.7L451 390.8L452 390.8L452 394.1L453 394.1L453 393.8L454 393.8L454 394.0L455 394.0L455 394.0L456 394.0L456 394.0L457 394.0L457 393.9L458 393.9L458 394.2L459 394.2L459 394.0L460 394.0L460 393.7L461 393.7L461 394.1L462 394.1L462 385.3L463 385.3L463 386.8L464 386.8L464 392.4L465 392.4L465 392.6L466 392.6L466 385.3L467 385.3L467 392.0L468 392.0L468 392.2L469 392.2L469 386.0L470 386.0L470 392.8L471 392.8L471 386.3L472 386.3L472 386.2L473 386.2L473 387.6L474 387.6L474 392.8L475 392.8L475 385.4L476 385.4L476 392.1L477 392.1L477 385.1L478 385.1L478 386.6L479 386.6L479 393.2L480 393.2L480 392.7L481 392.7L481 385.7L482 385.7L482 387.2L483 387.2L483 387.6L484 387.6L484 388.7L485 388.7L485 392.8L486 392.8L486 392.0L487 392.0L487 385.1L488 385.1L488 392.3L489 392.3L489 393.1L490 393.1L490 387.1L491 387.1L491 393.3L492 393.3L492 393.2L493 393.2L493 392.6L494 392.6L494 385.6L495 385.6L495 393.0L496 393.0L496 387.1L497 387.1L497 388.4L498 388.4L498 393.2L499 393.2L499 392.6L500 392.6L500 386.7L501 386.7L501 393.1L502 393.1L502 391.8L503 391.8L503 387.4L504 387.4L504 392.4L505 392.4L505 392.8L506 392.8L506 392.6L507 392.6L507 385.5L508 385.5L508 391.9L509 391.9L509 393.1L510 393.1L510 387.3L511 387.3L511 393.1L512 393.1L512 385.3L513 385.3L513 387.4L514 387.4L514 393.2L515 393.2L515 392.8L516 392.8L516 386.5L517 386.5L517 392.2L518 392.2L518 393.4L519 393.4L519 386.3L520 386.3L520 385.3L521 385.3L521 393.3L522 393.3L522 392.6L523 392.6L523 387.1L524 387.1L524 392.6L525 392.6L525 391.9L526 391.9L526 385.2L527 385.2L527 391.9L528 391.9L528 392.8L529 392.8L529 385.6L530 385.6L530 387.0L531 387.0L531 393.1L532 393.1L532 385.0L533 385.0L533 386.6L534 386.6L534 387.0L535 387.0L535 392.3L536 392.3L536 386.3L537 386.3L537 392.3L538 392.3L538 387.6L539 387.6L539 392.5L540 392.5L540 392.3L541 392.3L541 387.5L542 387.5L542 388.7L543 388.7L543 392.0L544 392.0L544 385.3L545 385.3L545 387.5L546 387.5L546 391.9L547 391.9L547 387.6L548 387.6L548 392.5L549 392.5L549 391.5L550 391.5L550 392.1L551 392.1L551 387.6L552 387.6L552 388.7L553 388.7L553 386.2L554 386.2L554 387.6L555 387.6L555 387.0L556 387.0L556 388.2L557 388.2L557 385.3L558 385.3L558 386.8L559 386.8L559 391.3L560 391.3L560 387.3L561 387.3L561 386.6L562 386.6L562 392.5L563 392.5L563 392.6L564 392.6L564 391.1L565 391.1L565 387.2L566 387.2L566 392.5L567 392.5L567 391.2L568 391.2L568 385.9L569 385.9L569 387.3L570 387.3L570 385.3L571 385.3L571 391.6L572 391.6L572 392.4L573 392.4L573 392.0L574 392.0L574 385.9L575 385.9L575 390.9L576 390.9L576 391.0L577 391.0L577 387.0L578 387.0L578 388.3L579 388.3L579 392.5L580 392.5L580 387.1L581 387.1L581 388.3L582 388.3L582 391.0L583 391.0L583 385.9L584 385.9L584 385.3L585 385.3L585 387.3L586 387.3L586 391.5L587 391.5L587 392.1L588 392.1L588 386.3L589 386.3L589 387.6L590 387.6L590 392.2L591 392.2L591 384.7L592 384.7L592 391.4L593 391.4L593 390.5L594 390.5L594 386.8L595 386.8L595 390.4L596 390.4L596 391.4L597 391.4L597 385.8L598 385.8L598 387.2L599 387.2L599 391.8L600 391.8L600 384.7L601 384.7L601 385.3L602 385.3L602 385.3L603 385.3L603 389.4L604 389.4L604 385.9L605 385.9L605 391.1L606 391.1L606 386.4L607 386.4L607 390.0L608 390.0L608 388.7L609 388.7L609 386.6L610 386.6L610 387.3L611 387.3L611 385.3L612 385.3L612 385.1L613 385.1L613 386.7L614 386.7L614 386.6L615 386.6L615 387.9L616 387.9L616 385.9L617 385.9L617 384.3L618 384.3L618 386.3L619 386.3L619 386.2L620 386.2L620 390.2L621 390.2L621 393.9L622 393.9L622 393.8L623 393.8L623 394.3L624 394.3L624 394.2L625 394.2L625 394.2L626 394.2L626 394.3L627 394.3L627 391.3L628 391.3L628 394.1L629 394.1L629 394.3L630 394.3L630 394.0L631 394.0L631 393.7L632 393.7L632 394.3L633 394.3L633 393.7L634 393.7L634 394.0L635 394.0L635 394.1L636 394.1L636 386.8L637 386.8L637 394.1L638 394.1L638 393.7L639 393.7L639 393.8L640 393.8L640 394.0L641 394.0L641 393.7L642 393.7L642 393.9L643 393.9L643 394.2L644 394.2L644 394.3L645 394.3L645 393.9L646 393.9L646 393.8L647 393.8L647 394.1L648 394.1L648 393.7L649 393.7L649 394.2L650 394.2L650 387.2L651 387.2L651 393.0L652 393.0L652 385.8L653 385.8L653 393.1L654 393.1L654 386.1L655 386.1L655 392.0L656 392.0L656 391.9L657 391.9L657 385.3L658 385.3L658 392.0L659 392.0L659 391.9L660 391.9L660 388.3L661 388.3L661 386.6L662 386.6L662 392.0L663 392.0L663 386.0L664 386.0L664 385.8L665 385.8L665 393.4L666 393.4L666 385.4L667 385.4L667 393.0L668 393.0L668 393.3L669 393.3L669 385.8L670 385.8L670 386.6L671 386.6L671 392.0L672 392.0L672 394.1L673 394.1L673 394.2L674 394.2L674 394.0L675 394.0L675 394.2L676 394.2L676 394.2L677 394.2L677 394.0L678 394.0L678 394.4L679 394.4L679 394.3L680 394.3L680 393.8L681 393.8L681 393.8L682 393.8L682 394.2L683 394.2L683 394.3L684 394.3L684 393.7L685 393.7L685 386.8L686 386.8L686 393.9L687 393.9L687 394.4L688 394.4L688 393.7L689 393.7L689 394.3L690 394.3L690 385.1L691 385.1L691 392.2L692 392.2L692 393.1L693 393.1L693 385.6L694 385.6L694 387.1L695 387.1L695 393.2L696 393.2L696 386.5L697 386.5L697 387.8L698 387.8L698 393.1L699 393.1L699 387.6L700 387.6L700 392.0L701 392.0L701 386.1L702 386.1L702 387.5L703 387.5L703 393.0L704 393.0L704 392.0L705 392.0L705 386.5L706 386.5L706 392.1L707 392.1L707 391.9L708 391.9L708 392.1L709 392.1L709 386.8L710 386.8L710 392.7L711 392.7L711 385.9L712 385.9L712 392.7L713 392.7L713 387.2L714 387.2L714 392.6L715 392.6L715 392.8L716 392.8L716 386.9L717 386.9L717 392.6L718 392.6L718 393.3L719 393.3L719 393.0L720 393.0L720 387.0L721 387.0L721 392.2L722 392.2L722 392.2L723 392.2L723 393.1L724 393.1L724 385.5L725 385.5L725 392.4L726 392.4L726 392.4L727 392.4L727 387.5L728 387.5L728 392.9L729 392.9L729 386.3L730 386.3L730 392.2L731 392.2L731 387.2L732 387.2L732 392.0L733 392.0L733 386.7L734 386.7L734 392.5L735 392.5L735 392.9L736 392.9L736 393.2L737 393.2L737 386.4L738 386.4L738 387.7L739 387.7L739 392.0L740 392.0L740 386.9L741 386.9L741 392.4L742 392.4L742 384.8L743 384.8L743 386.5L744 386.5L744 393.2L745 393.2L745 392.1L746 392.1L746 392.3L747 392.3L747 387.5L748 387.5L748 393.8L749 393.8L749 393.8L750 393.8L750 393.9L751 393.9L751 393.9L752 393.9L752 393.0L753 393.0L753 397.3L752 397.3L752 396.8L751 396.8L751 397.1L750 397.1L750 397.0L749 397.0L749 397.6L748 397.6L748 401.0L747 401.0L747 398.3L746 398.3L746 397.6L745 397.6L745 398.8L744 398.8L744 406.6L743 406.6L743 410.3L742 410.3L742 398.3L741 398.3L741 406.8L740 406.8L740 397.6L739 397.6L739 398.8L738 398.8L738 401.2L737 401.2L737 397.7L736 397.7L736 397.7L735 397.7L735 398.7L734 398.7L734 402.7L733 402.7L733 398.6L732 398.6L732 400.7L731 400.7L731 398.4L730 398.4L730 421.3L729 421.3L729 398.2L728 398.2L728 402.9L727 402.9L727 398.7L726 398.7L726 398.6L725 398.6L725 406.3L724 406.3L724 398.2L723 398.2L723 398.1L722 398.1L722 398.4L721 398.4L721 400.2L720 400.2L720 398.1L719 398.1L719 397.8L718 397.8L718 397.6L717 397.6L717 404.9L716 404.9L716 397.3L715 397.3L715 398.6L714 398.6L714 401.8L713 401.8L713 398.5L712 398.5L712 401.9L711 401.9L711 397.4L710 397.4L710 405.6L709 405.6L709 398.3L708 398.3L708 398.6L707 398.6L707 398.5L706 398.5L706 401.8L705 401.8L705 397.3L704 397.3L704 398.4L703 398.4L703 401.2L702 401.2L702 405.1L701 405.1L701 398.1L700 398.1L700 401.9L699 401.9L699 397.6L698 397.6L698 399.7L697 399.7L697 402.7L696 402.7L696 398.8L695 398.8L695 399.1L694 399.1L694 401.7L693 401.7L693 398.7L692 398.7L692 398.3L691 398.3L691 401.5L690 401.5L690 396.8L689 396.8L689 396.5L688 396.5L688 396.8L687 396.8L687 396.4L686 396.4L686 405.8L685 405.8L685 396.8L684 396.8L684 396.7L683 396.7L683 396.2L682 396.2L682 396.3L681 396.3L681 396.4L680 396.4L680 396.6L679 396.6L679 396.7L678 396.7L678 396.7L677 396.7L677 396.3L676 396.3L676 396.5L675 396.5L675 396.3L674 396.3L674 396.7L673 396.7L673 396.5L672 396.5L672 398.1L671 398.1L671 401.5L670 401.5L670 407.3L669 407.3L669 398.0L668 398.0L668 397.3L667 397.3L667 408.1L666 408.1L666 398.1L665 398.1L665 416.8L664 416.8L664 410.2L663 410.2L663 398.8L662 398.8L662 399.5L661 399.5L661 404.3L660 404.3L660 398.8L659 398.8L659 398.2L658 398.2L658 421.3L657 421.3L657 398.8L656 398.8L656 398.3L655 398.3L655 409.4L654 409.4L654 398.5L653 398.5L653 407.3L652 407.3L652 398.3L651 398.3L651 403.4L650 403.4L650 396.4L649 396.4L649 396.8L648 396.8L648 396.3L647 396.3L647 396.6L646 396.6L646 396.9L645 396.9L645 396.9L644 396.9L644 396.8L643 396.8L643 396.4L642 396.4L642 396.3L641 396.3L641 396.6L640 396.6L640 396.9L639 396.9L639 396.5L638 396.5L638 396.9L637 396.9L637 405.3L636 405.3L636 396.2L635 396.2L635 396.8L634 396.8L634 396.6L633 396.6L633 396.8L632 396.8L632 396.6L631 396.6L631 396.8L630 396.8L630 396.8L629 396.8L629 396.3L628 396.3L628 399.3L627 399.3L627 396.8L626 396.8L626 396.3L625 396.3L625 396.8L624 396.8L624 396.4L623 396.4L623 396.4L622 396.4L622 396.5L621 396.5L621 402.0L620 402.0L620 409.0L619 409.0L619 417.3L618 417.3L618 426.3L617 426.3L617 404.6L616 404.6L616 404.1L615 404.1L615 409.9L614 409.9L614 405.8L613 405.8L613 412.8L612 412.8L612 424.3L611 424.3L611 409.3L610 409.3L610 409.6L609 409.6L609 400.5L608 400.5L608 402.0L607 402.0L607 403.6L606 403.6L606 401.3L605 401.3L605 405.8L604 405.8L604 400.6L603 400.6L603 417.3L602 417.3L602 415.3L601 415.3L601 413.1L600 413.1L600 399.7L599 399.7L599 403.6L598 403.6L598 409.1L597 409.1L597 399.7L596 399.7L596 398.8L595 398.8L595 407.5L594 407.5L594 400.6L593 400.6L593 400.1L592 400.1L592 411.1L591 411.1L591 399.2L590 399.2L590 400.5L589 400.5L589 404.0L588 404.0L588 398.5L587 398.5L587 398.9L586 398.9L586 417.3L585 417.3L585 430.3L584 430.3L584 402.1L583 402.1L583 397.8L582 397.8L582 401.2L581 401.2L581 405.1L580 405.1L580 399.0L579 399.0L579 401.2L578 401.2L578 405.1L577 405.1L577 398.5L576 398.5L576 398.1L575 398.1L575 401.7L574 401.7L574 398.4L573 398.4L573 398.3L572 398.3L572 399.1L571 399.1L571 403.5L570 403.5L570 399.1L569 399.1L569 401.7L568 401.7L568 398.3L567 398.3L567 398.8L566 398.8L566 407.7L565 407.7L565 399.7L564 399.7L564 399.7L563 399.7L563 399.1L562 399.1L562 404.5L561 404.5L561 406.5L560 406.5L560 399.3L559 399.3L559 403.3L558 403.3L558 408.6L557 408.6L557 401.0L556 401.0L556 404.8L555 404.8L555 399.6L554 399.6L554 402.5L553 402.5L553 399.0L552 399.0L552 401.5L551 401.5L551 399.5L550 399.5L550 398.3L549 398.3L549 399.0L548 399.0L548 408.9L547 408.9L547 399.2L546 399.2L546 402.3L545 402.3L545 415.3L544 415.3L544 398.3L543 398.3L543 402.6L542 402.6L542 407.5L541 407.5L541 399.2L540 399.2L540 398.7L539 398.7L539 407.1L538 407.1L538 397.7L537 397.7L537 413.3L536 413.3L536 397.6L535 397.6L535 402.7L534 402.7L534 400.7L533 400.7L533 404.3L532 404.3L532 398.4L531 398.4L531 400.2L530 400.2L530 403.5L529 403.5L529 398.4L528 398.4L528 397.6L527 397.6L527 406.0L526 406.0L526 398.4L525 398.4L525 397.8L524 397.8L524 408.8L523 408.8L523 397.9L522 397.9L522 397.7L521 397.7L521 416.3L520 416.3L520 402.3L519 402.3L519 397.5L518 397.5L518 398.3L517 398.3L517 403.6L516 403.6L516 397.7L515 397.7L515 398.2L514 398.2L514 402.6L513 402.6L513 413.3L512 413.3L512 398.0L511 398.0L511 406.5L510 406.5L510 397.5L509 397.5L509 398.2L508 398.2L508 404.4L507 404.4L507 398.5L506 398.5L506 398.6L505 398.6L505 398.1L504 398.1L504 402.3L503 402.3L503 398.3L502 398.3L502 398.2L501 398.2L501 402.6L500 402.6L500 398.6L499 398.6L499 398.2L498 398.2L498 401.8L497 401.8L497 406.1L496 406.1L496 397.4L495 397.4L495 403.6L494 403.6L494 397.6L493 397.6L493 398.0L492 398.0L492 398.6L491 398.6L491 401.8L490 401.8L490 397.5L489 397.5L489 398.3L488 398.3L488 406.3L487 406.3L487 397.3L486 397.3L486 397.9L485 397.9L485 400.6L484 400.6L484 404.1L483 404.1L483 399.8L482 399.8L482 402.9L481 402.9L481 398.6L480 398.6L480 398.8L479 398.8L479 400.6L478 400.6L478 404.2L477 404.2L477 397.3L476 397.3L476 402.0L475 402.0L475 397.6L474 397.6L474 400.7L473 400.7L473 404.4L472 404.4L472 415.3L471 415.3L471 398.5L470 398.5L470 401.4L469 401.4L469 398.1L468 398.1L468 398.8L467 398.8L467 404.8L466 404.8L466 397.9L465 397.9L465 398.5L464 398.5L464 399.4L463 399.4L463 402.2L462 402.2L462 396.7L461 396.7L461 396.2L460 396.2L460 396.3L459 396.3L459 396.8L458 396.8L458 396.3L457 396.3L457 396.4L456 396.4L456 396.2L455 396.2L455 396.2L454 396.2L454 396.6L453 396.6L453 396.9L452 396.9L452 399.3L451 399.3L451 396.9L450 396.9L450 396.9L449 396.9L449 396.8L448 396.8L448 396.8L447 396.8L447 396.9L446 396.9L446 396.7L445 396.7L445 396.9L444 396.9L444 396.2L443 396.2L443 404.8L442 404.8L442 396.2L441 396.2L441 396.4L440 396.4L440 396.5L439 396.5L439 396.6L438 396.6L438 396.2L437 396.2L437 409.5L436 409.5L436 400.5L435 400.5L435 398.6L434 398.6L434 407.7L433 407.7L433 426.3L432 426.3L432 398.6L431 398.6L431 411.0L430 411.0L430 400.6L429 400.6L429 404.8L428 404.8L428 399.5L427 399.5L427 406.8L426 406.8L426 403.4L425 403.4L425 408.7L424 408.7L424 415.3L423 415.3L423 410.3L422 410.3L422 430.3L421 430.3L421 399.0L420 399.0L420 408.3L419 408.3L419 400.7L418 400.7L418 419.3L417 419.3L417 399.4L416 399.4L416 398.7L415 398.7L415 408.7L414 408.7L414 399.1L413 399.1L413 406.8L412 406.8L412 400.1L411 400.1L411 399.8L410 399.8L410 407.1L409 407.1L409 400.7L408 400.7L408 404.4L407 404.4L407 405.0L406 405.0L406 411.4L405 411.4L405 399.8L404 399.8L404 400.0L403 400.0L403 406.7L402 406.7L402 399.5L401 399.5L401 400.3L400 400.3L400 420.3L399 420.3L399 400.3L398 400.3L398 400.0L397 400.0L397 403.3L396 403.3L396 396.4L395 396.4L395 396.4L394 396.4L394 396.4L393 396.4L393 396.4L392 396.4L392 396.4L391 396.4L391 396.4L390 396.4L390 396.4L389 396.4L389 396.4L388 396.4L388 396.4L387 396.4L387 396.4L386 396.4L386 396.4L385 396.4L385 396.4L384 396.4L384 396.4L383 396.4L383 396.4L382 396.4L382 396.4L381 396.4L381 396.4L380 396.4L380 396.4L379 396.4L379 396.4L378 396.4L378 396.4L377 396.4L377 396.4L376 396.4L376 396.4L375 396.4L375 396.4L374 396.4L374 396.4L373 396.4L373 396.4L372 396.4L372 396.4L371 396.4L371 396.4L370 396.4L370 396.4L369 396.4L369 396.4L368 396.4L368 396.4L367 396.4L367 396.4L366 396.4L366 396.4L365 396.4L365 396.4L364 396.4L364 396.4L363 396.4L363 396.4L362 396.4L362 396.4L361 396.4L361 396.4L360 396.4L360 396.4L359 396.4L359 396.4L358 396.4L358 396.4L357 396.4L357 396.4L356 396.4L356 396.4L355 396.4L355 396.4L354 396.4L354 396.4L353 396.4L353 396.4L352 396.4L352 396.4L351 396.4L351 396.4L350 396.4L350 396.4L349 396.4L349 396.4L348 396.4L348 396.4L347 396.4L347 396.4L346 396.4L346 396.4L345 396.4L345 396.4L344 396.4L344 396.4L343 396.4L343 396.4L342 396.4L342 396.4L341 396.4L341 396.4L340 396.4L340 396.4L339 396.4L339 396.4L338 396.4L338 396.4L337 396.4L337 396.4L336 396.4L336 396.4L335 396.4L335 396.4L334 396.4L334 396.4L333 396.4L333 396.4L332 396.4L332 396.4L331 396.4L331 396.4L330 396.4L330 396.4L329 396.4L329 396.4L328 396.4L328 396.4L327 396.4L327 396.4L326 396.4L326 396.4L325 396.4L325 396.4L324 396.4L324 396.4L323 396.4L323 396.4L322 396.4L322 396.4L321 396.4L321 396.4L320 396.4L320 396.4L319 396.4L319 396.4L318 396.4L318 396.4L317 396.4L317 396.4L316 396.4L316 396.4L315 396.4L315 396.4L314 396.4L314 396.4L313 396.4L313 396.4L312 396.4L312 396.4L311 396.4L311 396.4L310 396.4L310 396.4L309 396.4L309 396.4L308 396.4L308 396.4L307 396.4L307 396.4L306 396.4L306 396.4L305 396.4L305 396.4L304 396.4L304 396.4L303 396.4L303 396.4L302 396.4L302 396.4L301 396.4L301 396.4L300 396.4L300 396.4L299 396.4L299 396.4L298 396.4L298 396.5L297 396.5L297 396.5L296 396.5L296 396.5L295 396.5L295 396.5L294 396.5L294 396.5L293 396.5L293 396.5L292 396.5L292 396.5L291 396.5L291 396.5L290 396.5L290 399.2L289 399.2L289 396.7L288 396.7L288 398.3L287 398.3L287 396.7L286 396.7L286 397.8L285 397.8L285 399.3L284 399.3L284 398.5L283 398.5L283 398.7L282 398.7L282 398.3L281 398.3L281 399.8L280 399.8L280 396.7L279 396.7L279 398.0L278 398.0L278 398.2L277 398.2L277 400.3L276 400.3L276 396.9L275 396.9L275 397.0L274 397.0L274 397.0L273 397.0L273 399.8L272 399.8L272 398.5L271 398.5L271 397.8L270 397.8L270 398.8L269 398.8L269 398.8L268 398.8L268 396.9L267 396.9L267 399.4L266 399.4L266 398.6L265 398.6L265 397.8L264 397.8L264 398.1L263 398.1L263 399.3L262 399.3L262 396.7L261 396.7L261 396.8L260 396.8L260 396.9L259 396.9L259 397.7L258 397.7L258 396.8L257 396.8L257 396.9L256 396.9L256 398.8L255 398.8L255 396.8L254 396.8L254 396.8L253 396.8L253 397.0L252 397.0L252 397.0L251 397.0L251 396.9L250 396.9L250 396.9L249 396.9L249 396.8L248 396.8L248 396.7L247 396.7L247 399.0L246 399.0L246 399.3L245 399.3L245 396.8L244 396.8L244 396.7L243 396.7L243 397.2L242 397.2L242 396.7L241 396.7L241 396.7L240 396.7L240 397.0L239 397.0L239 396.7L238 396.7L238 397.0L237 397.0L237 398.8L236 398.8L236 396.8L235 396.8L235 396.9L234 396.9L234 398.1L233 398.1L233 396.9L232 396.9L232 396.9L231 396.9L231 396.9L230 396.9L230 396.9L229 396.9L229 396.7L228 396.7L228 396.9L227 396.9L227 396.8L226 396.8L226 397.8L225 397.8L225 398.3L224 398.3L224 396.9L223 396.9L223 397.0L222 397.0L222 396.8L221 396.8L221 397.0L220 397.0L220 398.0L219 398.0L219 396.9L218 396.9L218 396.7L217 396.7L217 396.8L216 396.8L216 396.9L215 396.9L215 398.3L214 398.3L214 399.8L213 399.8L213 396.9L212 396.9L212 396.7L211 396.7L211 397.0L210 397.0L210 397.0L209 397.0L209 398.3L208 398.3L208 402.3L207 402.3L207 405.3L206 405.3L206 396.8L205 396.8L205 397.0L204 397.0L204 396.9L203 396.9L203 396.9L202 396.9L202 397.0L201 397.0L201 398.3L200 398.3L200 396.7L199 396.7L199 397.0L198 397.0L198 396.7L197 396.7L197 396.9L196 396.9L196 397.0L195 397.0L195 397.0L194 397.0L194 397.0L193 397.0L193 397.0L192 397.0L192 396.8L191 396.8L191 398.8L190 398.8L190 396.9L189 396.9L189 396.7L188 396.7L188 397.9L187 397.9L187 397.0L186 397.0L186 396.7L185 396.7L185 396.8L184 396.8L184 398.8L183 398.8L183 396.8L182 396.8L182 397.0L181 397.0L181 396.7L180 396.7L180 396.8L179 396.8L179 396.7L178 396.7L178 397.6L177 397.6L177 396.8L176 396.8L176 398.3L175 398.3L175 396.8L174 396.8L174 396.7L173 396.7L173 396.9L172 396.9L172 396.9L171 396.9L171 396.7L170 396.7L170 396.8L169 396.8L169 399.3L168 399.3L168 396.8L167 396.8L167 396.9L166 396.9L166 397.0L165 397.0L165 396.7L164 396.7L164 397.0L163 397.0L163 396.9L162 396.9L162 396.9L161 396.9L161 396.8L160 396.8L160 396.8L159 396.8L159 399.8L158 399.8L158 399.3L157 399.3L157 397.0L156 397.0L156 396.8L155 396.8L155 396.9L154 396.9L154 396.9L153 396.9L153 396.8L152 396.8L152 396.9L151 396.9L151 398.3L150 398.3L150 396.9L149 396.9L149 399.3L148 399.3L148 398.3L147 398.3L147 399.3L146 399.3L146 398.1L145 398.1L145 396.8L144 396.8L144 397.0L143 397.0L143 398.7L142 398.7L142 396.8L141 396.8L141 398.8L140 398.8L140 399.8L139 399.8L139 397.0L138 397.0L138 396.9L137 396.9L137 396.7L136 396.7L136 397.3L135 397.3L135 396.9L134 396.9L134 396.9L133 396.9L133 400.3L132 400.3L132 405.3L131 405.3L131 396.8L130 396.8L130 396.8L129 396.8L129 397.0L128 397.0L128 396.8L127 396.8L127 396.7L126 396.7L126 398.8L125 398.8L125 396.8L124 396.8L124 397.5L123 397.5L123 396.7L122 396.7L122 396.7L121 396.7L121 396.8L120 396.8L120 397.0L119 397.0L119 397.0L118 397.0L118 396.7L117 396.7L117 396.8L116 396.8L116 396.8L115 396.8L115 397.0L114 397.0L114 396.9L113 396.9L113 397.0L112 397.0L112 396.9L111 396.9L111 398.8L110 398.8L110 396.9L109 396.9L109 396.8L108 396.8L108 396.8L107 396.8L107 398.3L106 398.3L106 399.8L105 399.8L105 397.0L104 397.0L104 397.0L103 397.0L103 396.7L102 396.7L102 396.8L101 396.8L101 396.9L100 396.9L100 396.8L99 396.8L99 396.8L98 396.8L98 396.8L97 396.8L97 396.9L96 396.9L96 398.0L95 398.0L95 397.0L94 397.0L94 396.7L93 396.7L93 396.8L92 396.8L92 396.8L91 396.8L91 396.7L90 396.7L90 396.9L89 396.9L89 396.8L88 396.8L88 397.0L87 397.0L87 397.0L86 397.0L86 396.9L85 396.9L85 396.9L84 396.9L84 396.9L83 396.9L83 399.3L82 399.3L82 397.0L81 397.0L81 396.9L80 396.9L80 396.7L79 396.7L79 396.7L78 396.7L78 396.8L77 396.8L77 398.8L76 398.8L76 397.0L75 397.0L75 396.8L74 396.8L74 397.0L73 397.0L73 398.3L72 398.3L72 396.9L71 396.9L71 396.8L70 396.8L70 397.0L69 397.0L69 398.2L68 398.2L68 396.8L67 396.8L67 399.3L66 399.3L66 402.3L65 402.3L65 405.3L64 405.3L64 396.8L63 396.8L63 396.7L62 396.7L62 396.8L61 396.8L61 396.7L60 396.7L60 397.0L59 397.0L59 396.7L58 396.7L58 397.0L57 397.0L57 397.0L56 397.0L56 396.7L55 396.7L55 396.9L54 396.9L54 396.9L53 396.9L53 398.8L52 398.8L52 396.8L51 396.8L51 398.7L50 398.7L50 396.8L49 396.8L49 396.7L48 396.7L48 396.7L47 396.7L47 398.9L46 398.9L46 396.9L45 396.9L45 396.7L44 396.7L44 396.8L43 396.8L43 396.9L42 396.9L42 397.0L41 397.0L41 396.7L40 396.7L40 410.3L39 410.3Z" fill="#0c1060"/><path d="M39 239.3H752M39 429.8H752" stroke="#4048a0" stroke-width="1"/><path d="M395.3 145V547.5" stroke="#282838" stroke-width="1.1"/><path d="M396 196v14" stroke="#f0f0ff" stroke-width="1.2"/><path d="M396 388v13" stroke="#f0f0ff" stroke-width="1.2"/></svg>
<div class="chk" style="left:752.5px;top:145px;width:14px;height:417px;"></div>
<div style="left:752px;top:145px;width:1px;height:403px;background:#404060;"></div>
<div style="left:753px;top:145px;width:13.5px;height:11.5px;background:#c0c0c0;border:1px solid;border-color:#e8e8e8 #404040 #202020 #e8e8e8;"></div>
<svg style="left:757.5px;top:149px" width="5" height="3" viewBox="0 0 5 3"><path d="M0 3h5l-2.5-3z" fill="#909090"/></svg>
<div style="left:753px;top:490.5px;width:13.5px;height:9.5px;background:#c0c0c0;border:1px solid;border-color:#e8e8e8 #404040 #202020 #e8e8e8;"></div>
<svg style="left:757.5px;top:494px" width="5" height="3" viewBox="0 0 5 3"><path d="M0 0h5l-2.5 3z" fill="#a0a0a0"/></svg>
<div style="left:752.8px;top:500px;width:14px;height:62px;background:#c0c0c0;"></div>
<div style="left:753px;top:501px;width:13.5px;height:12.5px;background:#c8c8c8;border:1px solid;border-color:#f0f0f0 #303030 #202020 #f0f0f0;"></div>
<svg style="left:754.5px;top:502.2px" width="10" height="10" viewBox="0 0 10 10"><circle cx="4" cy="4" r="3" fill="#e8e8e8" stroke="#000" stroke-width="1.1"/><path d="M6.2 6.2l3.3 3.3" stroke="#000" stroke-width="1.6"/></svg>
<div style="left:753px;top:514.5px;width:13.5px;height:12.5px;background:#c8c8c8;border:1px solid;border-color:#f0f0f0 #303030 #202020 #f0f0f0;"></div>
<svg style="left:754.5px;top:515.7px" width="10" height="10" viewBox="0 0 10 10"><circle cx="4" cy="4" r="3" fill="#e8e8e8" stroke="#000" stroke-width="1.1"/><path d="M6.2 6.2l3.3 3.3" stroke="#000" stroke-width="1.6"/><path d="M2.5 4h3" stroke="#000" stroke-width="1"/></svg>
<div style="left:753.5px;top:529px;width:6.5px;height:4.8px;background:#5c1010;"></div>
<div style="left:760px;top:529px;width:6px;height:4.8px;background:#a0a0a0;"></div>
<div style="left:753px;top:534.5px;width:13.5px;height:12.5px;background:#c8c8c8;border:1px solid;border-color:#f0f0f0 #303030 #202020 #f0f0f0;"></div>
<svg style="left:754.5px;top:535.7px" width="10" height="10" viewBox="0 0 10 10"><circle cx="4" cy="4" r="3" fill="#e8e8e8" stroke="#000" stroke-width="1.1"/><path d="M6.2 6.2l3.3 3.3" stroke="#000" stroke-width="1.6"/><circle cx="4" cy="4" r="1.8" fill="#000"/></svg>
<div style="left:752.5px;top:547.5px;width:15.5px;height:14.5px;background:#c0c0c0;"></div>
<svg style="left:755px;top:550px" width="11" height="11" viewBox="0 0 11 11"><path d="M10.5 1l-9.5 9.5M10.5 5l-5.5 5.5M10.5 8.5l-2 2" stroke="#888" stroke-width="1.1"/><path d="M10.5 2.2l-8.3 8.3M10.5 6.2l-4.3 4.3" stroke="#fff" stroke-width="0.8"/></svg>
<div class="chk" style="left:39px;top:547.5px;width:713.5px;height:14px;"></div>
<div style="left:39.5px;top:547.5px;width:11px;height:13.5px;background:#c0c0c0;border:1px solid;border-color:#e8e8e8 #202020 #202020 #e8e8e8;"></div>
<svg style="left:43.5px;top:551.5px" width="3" height="5" viewBox="0 0 3 5"><path d="M3 0v5l-3-2.5z" fill="#000"/></svg>
<div style="left:85.5px;top:547.5px;width:11.5px;height:13.5px;background:#c0c0c0;border:1px solid;border-color:#e8e8e8 #202020 #202020 #e8e8e8;"></div>
<div style="left:708px;top:547.5px;width:10.5px;height:13.5px;background:#c0c0c0;border:1px solid;border-color:#e8e8e8 #202020 #202020 #e8e8e8;"></div>
<svg style="left:712px;top:551.5px" width="3" height="5" viewBox="0 0 3 5"><path d="M0 0v5l3-2.5z" fill="#000"/></svg>
<div style="left:718.5px;top:547.5px;width:34px;height:14px;background:#c0c0c0;"></div>
<div style="left:720px;top:547.5px;width:13.5px;height:13.5px;background:#c8c8c8;border:1px solid;border-color:#f0f0f0 #303030 #202020 #f0f0f0;"></div>
<svg style="left:721.5px;top:548.7px" width="10" height="10" viewBox="0 0 10 10"><circle cx="4" cy="4" r="3" fill="#e8e8e8" stroke="#000" stroke-width="1.1"/><path d="M6.2 6.2l3.3 3.3" stroke="#000" stroke-width="1.6"/><path d="M2.5 4h3" stroke="#000" stroke-width="1"/></svg>
<div style="left:734.5px;top:548px;width:4.2px;height:9px;background:#a0a0a0;"></div>
<div style="left:734.5px;top:557px;width:4.2px;height:3.5px;background:#5c1010;"></div>
<div style="left:740px;top:547.5px;width:12.5px;height:13.5px;background:#c8c8c8;border:1px solid;border-color:#f0f0f0 #303030 #202020 #f0f0f0;"></div>
<svg style="left:741.5px;top:548.7px" width="10" height="10" viewBox="0 0 10 10"><circle cx="4" cy="4" r="3" fill="#e8e8e8" stroke="#000" stroke-width="1.1"/><path d="M6.2 6.2l3.3 3.3" stroke="#000" stroke-width="1.6"/><path d="M2.5 4h3M4 2.5v3" stroke="#000" stroke-width="1"/></svg>
<div style="left:0px;top:561.5px;width:768px;height:14px;background:#c0c0c0;"></div>
<div style="left:0px;top:561.5px;width:768px;height:1px;background:#e0e0e0;"></div>
<span class="t" style="left:1.5px;top:564px;font-size:9.4px;transform:scaleX(0.803);transform-origin:0 50%;-webkit-text-stroke:0.25px #000;">For Help, press F1</span>
<div style="left:364.5px;top:564px;width:44.0px;height:10.5px;border:1px solid;border-color:#808080 #fff #fff #808080;"></div>
<div style="left:410.5px;top:564px;width:28.0px;height:10.5px;border:1px solid;border-color:#808080 #fff #fff #808080;"></div>
<div style="left:440.5px;top:564px;width:28.0px;height:10.5px;border:1px solid;border-color:#808080 #fff #fff #808080;"></div>
<div style="left:471px;top:564px;width:27.5px;height:10.5px;border:1px solid;border-color:#808080 #fff #fff #808080;"></div>
<div style="left:501px;top:564px;width:124px;height:10.5px;border:1px solid;border-color:#808080 #fff #fff #808080;"></div>
<div style="left:364.5px;top:564px;width:44px;height:1px;background:#606060;"></div>
<span class="t" style="left:503.5px;top:564.3px;font-size:9.4px;transform:scaleX(0.806);transform-origin:0 50%;-webkit-text-stroke:0.25px #000;">Disk space: 10221MB (16%)</span>
<div style="left:628px;top:564px;width:69px;height:11px;background:linear-gradient(90deg,#148a18 0,#148a18 47.6px,#a8982c 47.6px,#a8982c 61.4px,#a81414 61.4px);"></div>
<span class="t" style="left:630.5px;top:564.3px;font-size:9.4px;transform:scaleX(0.855);transform-origin:0 50%;color:#063806;-webkit-text-stroke:0.25px #063806;">CPU: 20%</span>
<div style="left:698.5px;top:564px;width:68.5px;height:11px;background:linear-gradient(90deg,#148a18 0,#148a18 47.3px,#a8982c 47.3px,#a8982c 61.0px,#a81414 61.0px);"></div>
<span class="t" style="left:701.0px;top:564.3px;font-size:9.4px;transform:scaleX(0.815);transform-origin:0 50%;color:#063806;-webkit-text-stroke:0.25px #063806;">Disk: 20%</span>
</div></div></body></html>
